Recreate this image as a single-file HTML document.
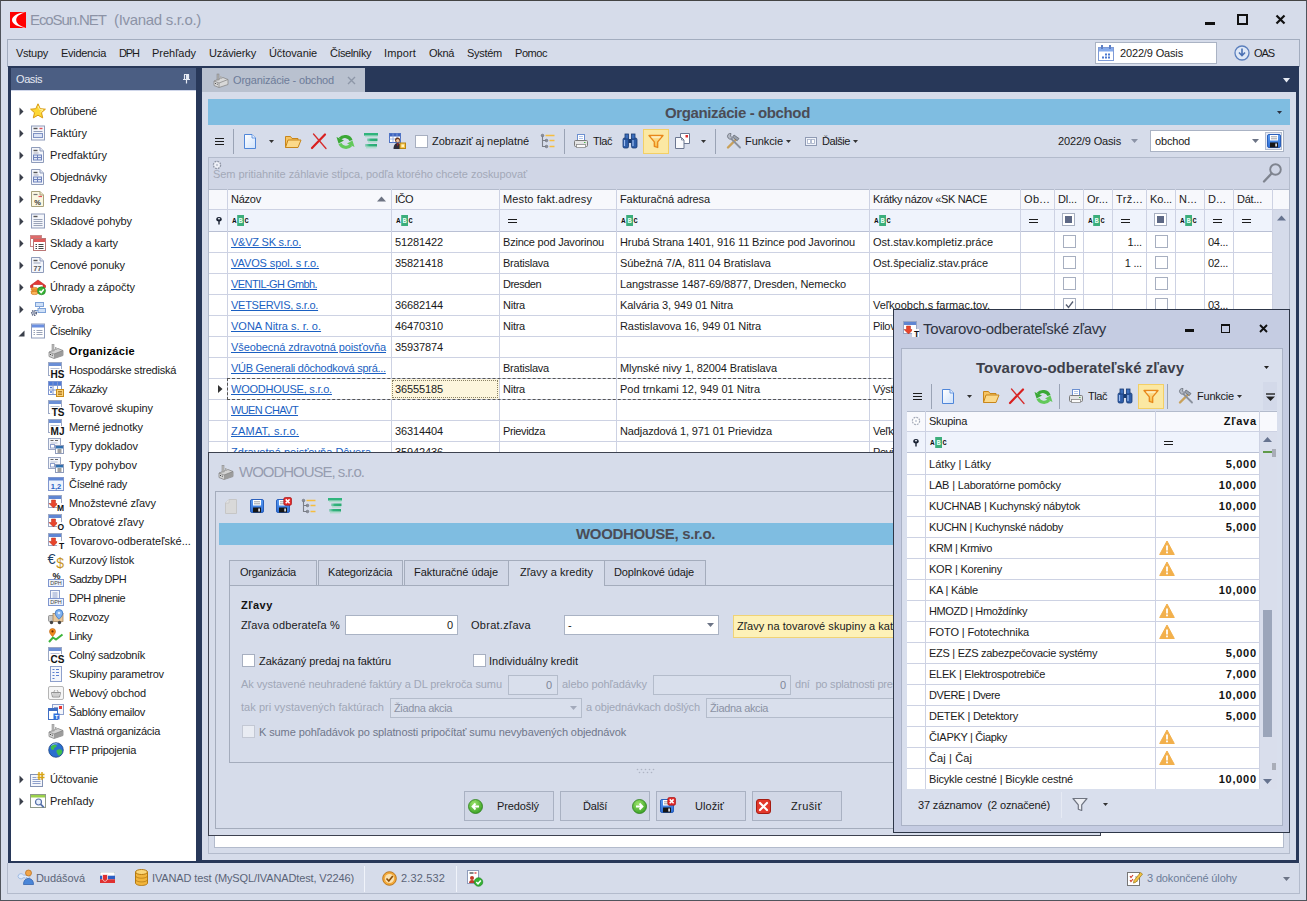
<!DOCTYPE html>
<html lang="sk"><head><meta charset="utf-8"><title>EcoSun.NET (Ivanad s.r.o.)</title>
<style>
html,body{margin:0;padding:0}
body{width:1307px;height:901px;overflow:hidden;position:relative;background:#d6dcea;font-family:"Liberation Sans", sans-serif;font-size:11px}
div,span,svg{position:absolute;box-sizing:border-box}
span{white-space:pre;line-height:14px;height:14px}
</style></head>
<body>
<div style="left:0px;top:0px;width:1307px;height:901px;background:#d6dcea;border:1px solid #50545c;border-top-color:#444;"></div>
<svg style="left:10px;top:12px;" width="16" height="16" viewBox="0 0 16 16"><rect width="16" height="16" fill="#f00"/><path d="M16 0.3C8 0.8 2 4 2 8s6 7.2 14 7.7C10 14.3 6.2 11.5 6.2 8S10 1.7 16 0.3z" fill="#fff"/></svg>
<span style="top:11px;font-size:15px;color:#8c93a6;letter-spacing:-1.1px;left:30px;line-height:18px;height:18px;">EcoSun.NET</span>
<span style="top:11px;font-size:15px;color:#8c93a6;letter-spacing:-0.31px;left:114px;line-height:18px;height:18px;">(Ivanad s.r.o.)</span>
<div style="left:1205px;top:22px;width:10px;height:3px;background:#111"></div>
<div style="left:1237px;top:14px;width:11px;height:11px;border:2px solid #111;border-top-width:2px;"></div>
<svg style="left:1275px;top:14px;" width="11" height="11" viewBox="0 0 11 11"><path d="M1.5 1.5L9.5 9.5M9.5 1.5L1.5 9.5" stroke="#111" stroke-width="2.2"/></svg>
<div style="left:7px;top:39px;width:1293px;height:28px;border:1px solid #a3adbf;border-bottom:none;background:#d6dcea"></div>
<span style="top:46px;font-size:11px;color:#1a1a1a;letter-spacing:-0.27px;left:16px;">Vstupy</span>
<span style="top:46px;font-size:11px;color:#1a1a1a;letter-spacing:-0.3px;left:61px;">Evidencia</span>
<span style="top:46px;font-size:11px;color:#1a1a1a;letter-spacing:-1.08px;left:119px;">DPH</span>
<span style="top:46px;font-size:11px;color:#1a1a1a;letter-spacing:-0.02px;left:152px;">Prehľady</span>
<span style="top:46px;font-size:11px;color:#1a1a1a;letter-spacing:-0.14px;left:209px;">Uzávierky</span>
<span style="top:46px;font-size:11px;color:#1a1a1a;letter-spacing:-0.1px;left:269px;">Účtovanie</span>
<span style="top:46px;font-size:11px;color:#1a1a1a;letter-spacing:-0.47px;left:330px;">Číselníky</span>
<span style="top:46px;font-size:11px;color:#1a1a1a;letter-spacing:0.14px;left:384px;">Import</span>
<span style="top:46px;font-size:11px;color:#1a1a1a;letter-spacing:-0.32px;left:429px;">Okná</span>
<span style="top:46px;font-size:11px;color:#1a1a1a;letter-spacing:-0.28px;left:467px;">Systém</span>
<span style="top:46px;font-size:11px;color:#1a1a1a;letter-spacing:-0.45px;left:515px;">Pomoc</span>
<div style="left:1095px;top:42px;width:122px;height:22px;background:#fff;border:1px solid #aab3c4"></div>
<svg style="left:1097px;top:44px;" width="18" height="18" viewBox="0 0 18 18"><rect x="1.500" y="3.500" width="15" height="13" fill="#fff" stroke="#7e9ad6"/><rect x="2" y="4" width="14" height="3.500" fill="#86abec"/><rect x="4" y="1" width="2" height="4" fill="#5e7fc4"/><rect x="12" y="1" width="2" height="4" fill="#5e7fc4"/><g fill="#4a78d0"><rect x="8" y="9.500" width="2" height="2"/><rect x="11" y="9.500" width="2" height="2"/><rect x="5" y="12.500" width="2" height="2"/><rect x="8" y="12.500" width="2" height="2"/><rect x="11" y="12.500" width="2" height="2"/></g></svg>
<span style="top:46px;font-size:11px;color:#1a1a1a;letter-spacing:-0.15px;left:1120px;">2022/9 Oasis</span>
<svg style="left:1234px;top:45px;" width="16" height="16" viewBox="0 0 16 16"><circle cx="8" cy="8" r="7" fill="#dfe8f6" stroke="#5b7fbd" stroke-width="1.3"/><path d="M8 3.5v6M5 7.5l3 3.2 3-3.200" stroke="#4a70b3" stroke-width="1.6" fill="none"/></svg>
<span style="top:46px;font-size:11px;color:#1a1a1a;letter-spacing:-1.08px;left:1254px;">OAS</span>
<div style="left:8px;top:66px;width:1291px;height:797px;background:#283859"></div>
<div style="left:11px;top:68px;width:185px;height:23px;background:#4b5e83"></div>
<span style="top:72px;font-size:11px;color:#e4e9f3;letter-spacing:-0.42px;left:16px;">Oasis</span>
<svg style="left:182px;top:74px;" width="9" height="10" viewBox="0 0 9 10"><path d="M2 0.500h5M2.500 0.500v5M6.500 0.500v5M1 5.500h7M4.500 5.500v4" stroke="#e4e9f3" stroke-width="1.200" fill="none"/><rect x="4" y="1" width="2" height="4" fill="#e4e9f3"/></svg>
<div style="left:11px;top:90px;width:185px;height:1px;background:#cfd6ea"></div>
<div style="left:11px;top:91px;width:185px;height:770px;background:#fff"></div>
<div style="left:202px;top:68px;width:163px;height:24px;background:#b9c1cf"></div>
<svg style="left:213px;top:72px;" width="16" height="16" viewBox="0 0 16 16"><path d="M1 9l9-3.500 5 2v5l-9 3-5-2z" fill="#d8d8d8" stroke="#8a8a8a" stroke-width=".8"/><path d="M1 9l5 2 9-3.500" fill="none" stroke="#8a8a8a" stroke-width=".8"/><path d="M6 11v4.500" stroke="#8a8a8a" stroke-width=".8"/><rect x="4" y="2" width="2" height="6" fill="#b0b0b0" stroke="#808080" stroke-width=".5"/><rect x="7" y="4" width="1.500" height="3" fill="#b0b0b0"/><rect x="2" y="11" width="1" height="1" fill="#555"/><rect x="3.800" y="11.700" width="1" height="1" fill="#555"/></svg>
<span style="top:73px;font-size:11px;color:#6d7c99;letter-spacing:-0.18px;left:233px;">Organizácie - obchod</span>
<svg style="left:347px;top:76px;" width="9" height="9" viewBox="0 0 9 9"><path d="M1 1L8 8M8 1L1 8" stroke="#8e97a8" stroke-width="1.4"/></svg>
<svg style="left:1283px;top:78px;" width="7" height="5" viewBox="0 0 7 5"><path d="M0 0h7L3.500 4.500z" fill="#e8ecf4"/></svg>
<div style="left:202px;top:92px;width:1094px;height:768px;background:#d6dcea"></div>
<svg style="left:19px;top:107px;" width="5" height="9" viewBox="0 0 5 9"><path d="M.5 .5l4 4-4 4z" fill="#3a3f4a"/></svg>
<svg style="left:30px;top:103px;overflow:visible;" width="16" height="16" viewBox="0 0 16 16"><path d="M8 .8l2.200 4.900 5.200.5-3.900 3.500 1.200 5.200L8 12.200l-4.700 2.700 1.200-5.200L.6 6.200l5.200-.5z" fill="#fdd835" stroke="#d99a12" stroke-width="1" stroke-linejoin="round"/><path d="M8 3l1.500 3.500 3.500.3-2.700 2.300" fill="none" stroke="#fff3a8" stroke-width="1"/></svg>
<span style="top:104px;font-size:11px;color:#1a1a1a;letter-spacing:-0.18px;left:50px;">Obľúbené</span>
<svg style="left:19px;top:129px;" width="5" height="9" viewBox="0 0 5 9"><path d="M.5 .5l4 4-4 4z" fill="#3a3f4a"/></svg>
<svg style="left:30px;top:125px;overflow:visible;" width="16" height="16" viewBox="0 0 16 16"><rect x="1.500" y="1" width="13" height="14" fill="#f4f6fb" stroke="#8f9cbb"/><path d="M3.500 3.500h4" stroke="#555" stroke-width="1.400"/><path d="M9.500 3.500h3" stroke="#e2515a" stroke-width="1.400"/><path d="M3.500 6.500h9" stroke="#8f9cbb"/><rect x="3.500" y="8.500" width="9" height="4" fill="#dbe3f5" stroke="#7f92c4"/></svg>
<span style="top:126px;font-size:11px;color:#1a1a1a;letter-spacing:0.04px;left:50px;">Faktúry</span>
<svg style="left:19px;top:151px;" width="5" height="9" viewBox="0 0 5 9"><path d="M.5 .5l4 4-4 4z" fill="#3a3f4a"/></svg>
<svg style="left:30px;top:147px;overflow:visible;" width="16" height="16" viewBox="0 0 16 16"><path d="M1.500 .5h8.500l3.500 3.500v11.500h-12z" fill="#f4f6fb" stroke="#8f9cbb"/><path d="M10 .5v3.500h3.500" fill="#dfe4f1" stroke="#8f9cbb"/><path d="M3.500 3.500h4" stroke="#555" stroke-width="1.400"/><path d="M3.500 6h5" stroke="#aab" /><rect x="3.500" y="8" width="8" height="5" fill="#e3e9f7" stroke="#6f83bd"/><path d="M3.500 10.500h8M7.500 8v5" stroke="#6f83bd"/></svg>
<span style="top:148px;font-size:11px;color:#1a1a1a;letter-spacing:0.07px;left:50px;">Predfaktúry</span>
<svg style="left:19px;top:173px;" width="5" height="9" viewBox="0 0 5 9"><path d="M.5 .5l4 4-4 4z" fill="#3a3f4a"/></svg>
<svg style="left:30px;top:169px;overflow:visible;" width="16" height="16" viewBox="0 0 16 16"><path d="M1.500 .5h8.500l3.500 3.500v11.500h-12z" fill="#f4f6fb" stroke="#8f9cbb"/><path d="M10 .5v3.500h3.500" fill="#dfe4f1" stroke="#8f9cbb"/><path d="M3.500 3.500h4" stroke="#555" stroke-width="1.400"/><path d="M3.500 6h5" stroke="#aab" /><rect x="3.500" y="8" width="8" height="5" fill="#e3e9f7" stroke="#6f83bd"/><path d="M3.500 10.500h8M7.500 8v5" stroke="#6f83bd"/></svg>
<span style="top:170px;font-size:11px;color:#1a1a1a;letter-spacing:-0.11px;left:50px;">Objednávky</span>
<svg style="left:19px;top:195px;" width="5" height="9" viewBox="0 0 5 9"><path d="M.5 .5l4 4-4 4z" fill="#3a3f4a"/></svg>
<svg style="left:30px;top:191px;overflow:visible;" width="16" height="16" viewBox="0 0 16 16"><path d="M1.500 .5h8.500l3.500 3.500v11.500h-12z" fill="#fbf7e2" stroke="#a9a27c"/><path d="M10 .5v3.500h3.500" fill="#ece6c6" stroke="#a9a27c"/><path d="M3.500 3.500h4" stroke="#777" stroke-width="1.200"/><path d="M8.500 5.500h3.500" stroke="#e2515a" stroke-width="1.200"/><text x="7.500" y="13.500" font-family="Liberation Sans, sans-serif" font-size="7.500" font-weight="bold" text-anchor="middle" fill="#333">%</text></svg>
<span style="top:192px;font-size:11px;color:#1a1a1a;letter-spacing:-0.11px;left:50px;">Preddavky</span>
<svg style="left:19px;top:217px;" width="5" height="9" viewBox="0 0 5 9"><path d="M.5 .5l4 4-4 4z" fill="#3a3f4a"/></svg>
<svg style="left:30px;top:213px;overflow:visible;" width="16" height="16" viewBox="0 0 16 16"><rect x="1.500" y="1" width="13" height="14" fill="#f4f6fb" stroke="#8f9cbb"/><path d="M3.500 3.500h4" stroke="#555" stroke-width="1.400"/><path d="M3.500 6.500h9M3.500 8.500h9M3.500 10.500h9M3.500 12.500h9" stroke="#9aa3b8"/></svg>
<span style="top:214px;font-size:11px;color:#1a1a1a;letter-spacing:-0.12px;left:50px;">Skladové pohyby</span>
<svg style="left:19px;top:239px;" width="5" height="9" viewBox="0 0 5 9"><path d="M.5 .5l4 4-4 4z" fill="#3a3f4a"/></svg>
<svg style="left:30px;top:235px;overflow:visible;" width="16" height="16" viewBox="0 0 16 16"><rect x=".5" y=".5" width="11" height="11" fill="#fff" stroke="#c98a8a"/><rect x="1" y="1" width="10" height="3" fill="#e06a6a"/><rect x="3.500" y="3.500" width="12" height="12" fill="#fff" stroke="#b77"/><rect x="4" y="4" width="11" height="3" fill="#df5b5b"/><path d="M5.500 9.500h1.500M8.500 9.500h5M5.500 11.500h1.500M8.500 11.500h5M5.500 13.500h1.500M8.500 13.500h5" stroke="#444" stroke-width="1.200"/></svg>
<span style="top:236px;font-size:11px;color:#1a1a1a;letter-spacing:-0.08px;left:50px;">Sklady a karty</span>
<svg style="left:19px;top:261px;" width="5" height="9" viewBox="0 0 5 9"><path d="M.5 .5l4 4-4 4z" fill="#3a3f4a"/></svg>
<svg style="left:30px;top:257px;overflow:visible;" width="16" height="16" viewBox="0 0 16 16"><path d="M1.500 .5h8.500l3.500 3.500v11.500h-12z" fill="#f4f6fb" stroke="#8f9cbb"/><path d="M10 .5v3.500h3.500" fill="#dfe4f1" stroke="#8f9cbb"/><path d="M3.500 3.500h4" stroke="#555" stroke-width="1.400"/><path d="M3.500 6h7" stroke="#9aa3b8"/><text x="7.500" y="13.500" font-family="Liberation Sans, sans-serif" font-size="7" font-weight="bold" text-anchor="middle" fill="#555">77</text></svg>
<span style="top:258px;font-size:11px;color:#1a1a1a;letter-spacing:-0.11px;left:50px;">Cenové ponuky</span>
<svg style="left:19px;top:283px;" width="5" height="9" viewBox="0 0 5 9"><path d="M.5 .5l4 4-4 4z" fill="#3a3f4a"/></svg>
<svg style="left:30px;top:279px;overflow:visible;" width="16" height="16" viewBox="0 0 16 16"><path d="M.5 6.500l7.500-5.500 7.500 5.500v2h-2.500v-3h-10v3h-2.500z" fill="#e53935" stroke="#b71c1c" stroke-width=".6"/><ellipse cx="4.500" cy="10" rx="3.500" ry="1.600" fill="#f9a13a" stroke="#c76a12" stroke-width=".6"/><ellipse cx="4.500" cy="12.500" rx="3.500" ry="1.600" fill="#f9a13a" stroke="#c76a12" stroke-width=".6"/><ellipse cx="4.500" cy="14" rx="3.500" ry="1.600" fill="#fbb75c" stroke="#c76a12" stroke-width=".6"/><circle cx="11.500" cy="11.800" r="4" fill="#34b233" stroke="#1d7f1c" stroke-width=".6"/><path d="M9.500 11.800l1.600 1.700 2.700-3.200" stroke="#fff" stroke-width="1.500" fill="none"/></svg>
<span style="top:280px;font-size:11px;color:#1a1a1a;letter-spacing:-0.04px;left:50px;">Úhrady a zápočty</span>
<svg style="left:19px;top:305px;" width="5" height="9" viewBox="0 0 5 9"><path d="M.5 .5l4 4-4 4z" fill="#3a3f4a"/></svg>
<svg style="left:30px;top:301px;overflow:visible;" width="16" height="16" viewBox="0 0 16 16"><rect x="5.500" y="1.500" width="8" height="4" fill="#cfe0f7" stroke="#7ea2d8"/><rect x="8" y="7.500" width="7.500" height="4" fill="#cfe0f7" stroke="#7ea2d8"/><path d="M9.500 5.500v2M5 9.500h3" stroke="#7ea2d8"/><circle cx="4" cy="12" r="2.300" fill="none" stroke="#55607e" stroke-width="1.500" stroke-dasharray="1.200 .8"/><circle cx="4" cy="12" r="1.200" fill="#dfe5f3" stroke="#55607e" stroke-width=".7"/></svg>
<span style="top:302px;font-size:11px;color:#1a1a1a;letter-spacing:-0.14px;left:50px;">Výroba</span>
<svg style="left:18px;top:330px;" width="7" height="7" viewBox="0 0 7 7"><path d="M6.500 .5v6h-6z" fill="#3a3f4a"/></svg>
<svg style="left:30px;top:323px;overflow:visible;" width="16" height="16" viewBox="0 0 16 16"><rect x="1.500" y="1" width="13" height="14" fill="#fff" stroke="#8f9cbb"/><rect x="2" y="1.500" width="12" height="3" fill="#6b8fe0"/><path d="M3.500 7.500h1.500M6.500 7.500h6M3.500 9.500h1.500M6.500 9.500h6M3.500 11.500h1.500M6.500 11.500h6" stroke="#9aa3b8" stroke-width="1.100"/></svg>
<span style="top:324px;font-size:11px;color:#1a1a1a;letter-spacing:-0.47px;left:50px;">Číselníky</span>
<svg style="left:48px;top:343px;overflow:visible;" width="16" height="16" viewBox="0 0 16 16"><path d="M1 9l9-3.500 5 2v5l-9 3-5-2z" fill="#d4d4d4" stroke="#888" stroke-width=".8"/><path d="M6 11l9-3.500v5l-9 3z" fill="#9c9c9c"/><path d="M1 9l5 2 9-3.500" fill="none" stroke="#777" stroke-width=".6"/><rect x="4" y="1.500" width="2" height="6.500" fill="#bdbdbd" stroke="#808080" stroke-width=".5"/><rect x="7" y="4" width="1.500" height="3" fill="#aaa"/><rect x="2" y="11" width="1" height="1" fill="#444"/><rect x="3.800" y="11.700" width="1" height="1" fill="#444"/></svg>
<span style="top:344px;font-size:11px;color:#000;letter-spacing:0.33px;font-weight:bold;left:69px;">Organizácie</span>
<svg style="left:48px;top:362px;overflow:visible;" width="16" height="16" viewBox="0 0 16 16"><rect x=".5" y=".5" width="13" height="13" fill="#fff" stroke="#9aa7c4"/><rect x="1" y="1" width="12" height="3" fill="#6b8fd6"/><path d="M2.500 6.500h9M2.500 8.500h9M2.500 10.500h9" stroke="#b9c2d6" stroke-width="1"/><rect x="2" y="7" width="14" height="9" fill="#fff" opacity=".9"/><text x="16.5" y="16" font-family="Liberation Sans, sans-serif" font-weight="bold" font-size="10" text-anchor="end" fill="#111">HS</text></svg>
<span style="top:363px;font-size:11px;color:#1a1a1a;letter-spacing:-0.23px;left:69px;">Hospodárske strediská</span>
<svg style="left:48px;top:381px;overflow:visible;" width="16" height="16" viewBox="0 0 16 16"><rect x=".5" y=".5" width="13" height="13" fill="#fff" stroke="#7f96cf"/><rect x="1" y="1" width="12" height="3" fill="#4f7bd6"/><path d="M5 .5v13M9.500 .5v13M.5 4.500h13M.5 9h13" stroke="#7f96cf"/><path d="M2 6.500h2M2 11h2" stroke="#4f7bd6" stroke-width="1.400"/><rect x="8.500" y="8.500" width="7" height="7" fill="#fbd37a" stroke="#c98d1b"/><path d="M10 10.500h4M10 12h4M10 13.500h4" stroke="#a86c10" stroke-width=".8"/></svg>
<span style="top:382px;font-size:11px;color:#1a1a1a;letter-spacing:-0.42px;left:69px;">Zákazky</span>
<svg style="left:48px;top:400px;overflow:visible;" width="16" height="16" viewBox="0 0 16 16"><rect x=".5" y=".5" width="13" height="13" fill="#fff" stroke="#9aa7c4"/><rect x="1" y="1" width="12" height="3" fill="#6b8fd6"/><path d="M2.500 6.500h9M2.500 8.500h9M2.500 10.500h9" stroke="#b9c2d6" stroke-width="1"/><rect x="2" y="7" width="14" height="9" fill="#fff" opacity=".9"/><text x="16.5" y="16" font-family="Liberation Sans, sans-serif" font-weight="bold" font-size="10" text-anchor="end" fill="#111">TS</text></svg>
<span style="top:401px;font-size:11px;color:#1a1a1a;letter-spacing:-0.06px;left:69px;">Tovarové skupiny</span>
<svg style="left:48px;top:419px;overflow:visible;" width="16" height="16" viewBox="0 0 16 16"><rect x=".5" y=".5" width="13" height="13" fill="#fff" stroke="#9aa7c4"/><rect x="1" y="1" width="12" height="3" fill="#6b8fd6"/><path d="M2.500 6.500h9M2.500 8.500h9M2.500 10.500h9" stroke="#b9c2d6" stroke-width="1"/><rect x="2" y="7" width="14" height="9" fill="#fff" opacity=".9"/><text x="16.5" y="16" font-family="Liberation Sans, sans-serif" font-weight="bold" font-size="10" text-anchor="end" fill="#111">MJ</text></svg>
<span style="top:420px;font-size:11px;color:#1a1a1a;letter-spacing:-0.09px;left:69px;">Merné jednotky</span>
<svg style="left:48px;top:438px;overflow:visible;" width="16" height="16" viewBox="0 0 16 16"><rect x=".5" y=".5" width="12" height="11" fill="#f4f6fb" stroke="#9aa7c4"/><path d="M2.500 2.500h3M7 2.500h3" stroke="#666" stroke-width="1.200"/><path d="M2.500 5h7" stroke="#b9c2d6"/><rect x="2.500" y="6.500" width="4" height="3.500" fill="#fff" stroke="#8ea0cc"/><rect x="7.500" y="7.500" width="8" height="8" fill="#fff" stroke="#8f9cbb"/><rect x="8" y="8" width="7" height="2.500" fill="#2f6fae"/><path d="M9.500 12h4M9.500 14h4" stroke="#444" stroke-width="1.100"/></svg>
<span style="top:439px;font-size:11px;color:#1a1a1a;letter-spacing:-0.1px;left:69px;">Typy dokladov</span>
<svg style="left:48px;top:457px;overflow:visible;" width="16" height="16" viewBox="0 0 16 16"><rect x=".5" y=".5" width="12" height="11" fill="#f4f6fb" stroke="#9aa7c4"/><path d="M2.500 2.500h3M7 2.500h3" stroke="#666" stroke-width="1.200"/><path d="M2.500 5h7" stroke="#b9c2d6"/><rect x="2.500" y="6.500" width="4" height="3.500" fill="#fff" stroke="#8ea0cc"/><rect x="7.500" y="7.500" width="8" height="8" fill="#fff" stroke="#8f9cbb"/><rect x="8" y="8" width="7" height="2.500" fill="#2f6fae"/><path d="M9.500 12h4M9.500 14h4" stroke="#444" stroke-width="1.100"/></svg>
<span style="top:458px;font-size:11px;color:#1a1a1a;letter-spacing:0.01px;left:69px;">Typy pohybov</span>
<svg style="left:48px;top:476px;overflow:visible;" width="16" height="16" viewBox="0 0 16 16"><rect x=".5" y="1.500" width="15" height="13" fill="#eef3fc" stroke="#7f96cf"/><rect x="1" y="2" width="14" height="2.500" fill="#5f86d3"/><text x="8" y="12.500" font-family="Liberation Sans, sans-serif" font-size="7.500" font-weight="bold" text-anchor="middle" fill="#2762c4">1,2</text></svg>
<span style="top:477px;font-size:11px;color:#1a1a1a;letter-spacing:-0.31px;left:69px;">Číselné rady</span>
<svg style="left:48px;top:495px;overflow:visible;" width="16" height="16" viewBox="0 0 16 16"><rect x=".5" y=".5" width="13" height="12" fill="#fff" stroke="#9aa7c4"/><rect x="1" y="1" width="12" height="3" fill="#5f86d3"/><path d="M3.500 5h4v3.500h2.500l-4.500 4.500-4.500-4.500h2.500z" fill="#e8452c" stroke="#b52a18" stroke-width=".5"/><rect x="9" y="8" width="7" height="8" fill="#fff" opacity=".9"/><text x="16.2" y="15.5" font-family="Liberation Sans, sans-serif" font-weight="bold" font-size="8.5" text-anchor="end" fill="#111">M</text></svg>
<span style="top:496px;font-size:11px;color:#1a1a1a;letter-spacing:-0.08px;left:69px;">Množstevné zľavy</span>
<svg style="left:48px;top:514px;overflow:visible;" width="16" height="16" viewBox="0 0 16 16"><rect x=".5" y=".5" width="13" height="12" fill="#fff" stroke="#9aa7c4"/><rect x="1" y="1" width="12" height="3" fill="#5f86d3"/><path d="M3.500 5h4v3.500h2.500l-4.500 4.500-4.500-4.500h2.500z" fill="#e8452c" stroke="#b52a18" stroke-width=".5"/><rect x="9" y="8" width="7" height="8" fill="#fff" opacity=".9"/><text x="16.2" y="15.5" font-family="Liberation Sans, sans-serif" font-weight="bold" font-size="8.5" text-anchor="end" fill="#111">O</text></svg>
<span style="top:515px;font-size:11px;color:#1a1a1a;letter-spacing:0.06px;left:69px;">Obratové zľavy</span>
<svg style="left:48px;top:533px;overflow:visible;" width="16" height="16" viewBox="0 0 16 16"><rect x=".5" y=".5" width="13" height="12" fill="#fff" stroke="#9aa7c4"/><rect x="1" y="1" width="12" height="3" fill="#5f86d3"/><path d="M3.500 5h4v3.500h2.500l-4.500 4.500-4.500-4.500h2.500z" fill="#e8452c" stroke="#b52a18" stroke-width=".5"/><rect x="9" y="8" width="7" height="8" fill="#fff" opacity=".9"/><text x="16.2" y="15.5" font-family="Liberation Sans, sans-serif" font-weight="bold" font-size="8.5" text-anchor="end" fill="#111">T</text></svg>
<span style="top:534px;font-size:11px;color:#1a1a1a;letter-spacing:0.03px;left:69px;">Tovarovo-odberateľské...</span>
<svg style="left:48px;top:552px;overflow:visible;" width="16" height="16" viewBox="0 0 16 16"><text x="-.5" y="11.500" font-family="Liberation Sans, sans-serif" font-size="14.500" fill="#1c3f66">€</text><text x="8.300" y="15.500" font-family="Liberation Sans, sans-serif" font-size="14" fill="#c8961e">$</text></svg>
<span style="top:553px;font-size:11px;color:#1a1a1a;letter-spacing:-0.25px;left:69px;">Kurzový lístok</span>
<svg style="left:48px;top:571px;overflow:visible;" width="16" height="16" viewBox="0 0 16 16"><text x="8.500" y="7.500" font-family="Liberation Sans, sans-serif" font-size="9" font-weight="bold" text-anchor="middle" fill="#222">%</text><rect x=".5" y="8.500" width="15" height="7" fill="#eef3fc" stroke="#7f96cf"/><text x="8" y="14.300" font-family="Liberation Sans, sans-serif" font-size="5.500" text-anchor="middle" fill="#444">DPH</text></svg>
<span style="top:572px;font-size:11px;color:#1a1a1a;letter-spacing:-0.6px;left:69px;">Sadzby DPH</span>
<svg style="left:48px;top:590px;overflow:visible;" width="16" height="16" viewBox="0 0 16 16"><rect x="2.500" y=".5" width="9" height="9" fill="#f4f6fb" stroke="#8ea0cc"/><path d="M4.500 3h5M4.500 5h5M4.500 7h5" stroke="#8ea0cc"/><rect x=".5" y="8.500" width="15" height="7" fill="#eef3fc" stroke="#7f96cf"/><text x="8" y="14.300" font-family="Liberation Sans, sans-serif" font-size="5.500" text-anchor="middle" fill="#444">DPH</text></svg>
<span style="top:591px;font-size:11px;color:#1a1a1a;letter-spacing:-0.52px;left:69px;">DPH plnenie</span>
<svg style="left:48px;top:609px;overflow:visible;" width="16" height="16" viewBox="0 0 16 16"><rect x=".5" y="6.500" width="5" height="6" rx="1" fill="#c9c9c9" stroke="#777" stroke-width=".7"/><rect x="5" y="4.500" width="10" height="8" fill="#e8c79a" stroke="#9a7a50" stroke-width=".7"/><circle cx="3.500" cy="13.500" r="1.700" fill="#444"/><circle cx="11.500" cy="13.500" r="1.700" fill="#444"/><path d="M11 .5a3.800 3.800 0 0 1 3.800 3.800c0 2.500-3.800 6-3.800 6s-3.800-3.500-3.800-6A3.800 3.800 0 0 1 11 .5z" fill="#7fb2f0" stroke="#2f6fc4" stroke-width=".8"/><circle cx="11" cy="4" r="1.300" fill="#dcebff"/></svg>
<span style="top:610px;font-size:11px;color:#1a1a1a;letter-spacing:-0.31px;left:69px;">Rozvozy</span>
<svg style="left:48px;top:628px;overflow:visible;" width="16" height="16" viewBox="0 0 16 16"><path d="M1 14l4-4.500 3 2 6.500-5" stroke="#3db53a" stroke-width="2" fill="none"/><path d="M4.500 .5a3 3 0 0 1 3 3c0 2-3 5-3 5s-3-3-3-5a3 3 0 0 1 3-3z" fill="#f28a1e" stroke="#b85f0c" stroke-width=".6"/><circle cx="4.500" cy="3.400" r="1.100" fill="#6b2c00"/></svg>
<span style="top:629px;font-size:11px;color:#1a1a1a;letter-spacing:-0.54px;left:69px;">Linky</span>
<svg style="left:48px;top:647px;overflow:visible;" width="16" height="16" viewBox="0 0 16 16"><rect x=".5" y=".5" width="13" height="13" fill="#fff" stroke="#9aa7c4"/><rect x="1" y="1" width="12" height="3" fill="#6b8fd6"/><path d="M2.500 6.500h9M2.500 8.500h9M2.500 10.500h9" stroke="#b9c2d6" stroke-width="1"/><rect x="2" y="7" width="14" height="9" fill="#fff" opacity=".9"/><text x="16.5" y="16" font-family="Liberation Sans, sans-serif" font-weight="bold" font-size="10" text-anchor="end" fill="#111">CS</text></svg>
<span style="top:648px;font-size:11px;color:#1a1a1a;letter-spacing:-0.36px;left:69px;">Colný sadzobník</span>
<svg style="left:48px;top:666px;overflow:visible;" width="16" height="16" viewBox="0 0 16 16"><rect x="2.500" y=".5" width="11" height="15" fill="#f4f6fb" stroke="#8ea0cc"/><path d="M4.500 3.500h2M8 3.500h3M4.500 6.500h2M8 6.500h3M4.500 9.500h2M8 9.500h3M4.500 12.500h2" stroke="#5c7fd0" stroke-width="1.100"/></svg>
<span style="top:667px;font-size:11px;color:#1a1a1a;letter-spacing:-0.16px;left:69px;">Skupiny parametrov</span>
<svg style="left:48px;top:685px;overflow:visible;" width="16" height="16" viewBox="0 0 16 16"><rect x=".5" y="1.500" width="15" height="13" rx="1.500" fill="#f6f6f6" stroke="#b5b5b5"/><path d="M3.500 7.500h9l-1 4.500h-7z" fill="none" stroke="#888" stroke-width=".9"/><path d="M5.500 7.500l1.500-2.500M10.500 7.500l-1.500-2.500M6 8v3.500M8 8v3.500M10 8v3.500" stroke="#888" stroke-width=".7"/></svg>
<span style="top:686px;font-size:11px;color:#1a1a1a;letter-spacing:-0.13px;left:69px;">Webový obchod</span>
<svg style="left:48px;top:704px;overflow:visible;" width="16" height="16" viewBox="0 0 16 16"><rect x="4.500" y=".5" width="11" height="10" fill="#f4f6fb" stroke="#8ea0cc"/><rect x="11" y="2" width="3" height="3" fill="#e53935"/><path d="M6 3.500h4M6 5.500h4" stroke="#8ea0cc"/><rect x=".5" y="4.500" width="9" height="11" fill="#fff" stroke="#3f6ec4"/><rect x="1" y="5" width="8" height="2" fill="#3f6ec4"/><rect x="5.500" y="9.500" width="6" height="6" fill="#2f6fdc"/><text x="8.500" y="14.800" font-family="Liberation Sans, sans-serif" font-size="6" font-weight="bold" text-anchor="middle" fill="#fff">T</text></svg>
<span style="top:705px;font-size:11px;color:#1a1a1a;letter-spacing:-0.31px;left:69px;">Šablóny emailov</span>
<svg style="left:48px;top:723px;overflow:visible;" width="16" height="16" viewBox="0 0 16 16"><path d="M1 9l9-3.500 5 2v5l-9 3-5-2z" fill="#d4d4d4" stroke="#888" stroke-width=".8"/><path d="M6 11l9-3.500v5l-9 3z" fill="#9c9c9c"/><path d="M1 9l5 2 9-3.500" fill="none" stroke="#777" stroke-width=".6"/><rect x="4" y="1.500" width="2" height="6.500" fill="#bdbdbd" stroke="#808080" stroke-width=".5"/><rect x="7" y="4" width="1.500" height="3" fill="#aaa"/><rect x="2" y="11" width="1" height="1" fill="#444"/><rect x="3.800" y="11.700" width="1" height="1" fill="#444"/></svg>
<span style="top:724px;font-size:11px;color:#1a1a1a;letter-spacing:-0.26px;left:69px;">Vlastná organizácia</span>
<svg style="left:48px;top:742px;overflow:visible;" width="16" height="16" viewBox="0 0 16 16"><circle cx="8" cy="8" r="7.300" fill="#2a6fd0" stroke="#123a7a" stroke-width=".7"/><path d="M3 4.500c1.500-1.500 3.500-2 5-1.500s.5 2-1 2.500-.5 2.500-2 2.500-2.800-2-2-3.500zM9 8c1.500-1 4-1 5 .5s-1 4.500-2.500 5-2-1.500-2.500-2.500-1-2.300 0-3z" fill="#3fbf4a"/><path d="M3.500 3.500c1.500-1.500 4-2.200 6-1.500" stroke="#bfe0ff" stroke-width=".9" fill="none" opacity=".8"/></svg>
<span style="top:743px;font-size:11px;color:#1a1a1a;letter-spacing:-0.31px;left:69px;">FTP pripojenia</span>
<svg style="left:19px;top:775px;" width="5" height="9" viewBox="0 0 5 9"><path d="M.5 .5l4 4-4 4z" fill="#3a3f4a"/></svg>
<svg style="left:30px;top:771px;overflow:visible;" width="16" height="16" viewBox="0 0 16 16"><rect x=".5" y="3.500" width="12" height="12" fill="#f4f6fb" stroke="#8392b4"/><path d="M2.500 6.500h4M2.500 8.500h8M2.500 10.500h8M2.500 12.500h8" stroke="#8ea0cc"/><path d="M9 1v8M12 1v8M7.500 3.500h7M7.500 6.500h7" stroke="#d9a514" stroke-width="1.400"/></svg>
<span style="top:772px;font-size:11px;color:#1a1a1a;letter-spacing:-0.1px;left:50px;">Účtovanie</span>
<svg style="left:19px;top:797px;" width="5" height="9" viewBox="0 0 5 9"><path d="M.5 .5l4 4-4 4z" fill="#3a3f4a"/></svg>
<svg style="left:30px;top:793px;overflow:visible;" width="16" height="16" viewBox="0 0 16 16"><rect x=".5" y="1.500" width="15" height="13" fill="#fff" stroke="#8f9a8a"/><rect x="1" y="2" width="14" height="2.500" fill="#9ad14b"/><circle cx="8.500" cy="9" r="3" fill="#e8f1ff" stroke="#5570a8" stroke-width="1.200"/><path d="M10.800 11.300l3 3" stroke="#5570a8" stroke-width="1.800"/></svg>
<span style="top:794px;font-size:11px;color:#1a1a1a;letter-spacing:-0.02px;left:50px;">Prehľady</span>
<div style="left:208px;top:99px;width:1082px;height:26px;background:#7fbde1"></div>
<span style="top:103px;font-size:15px;color:#4b4c56;letter-spacing:-0.38px;font-weight:bold;left:665px;line-height:20px;height:20px;">Organizácie - obchod</span>
<svg style="left:1277px;top:111px;" width="5" height="3" viewBox="0 0 5 3"><path d="M0 0h5L2.5 3z" fill="#2b3140"/></svg>
<svg style="left:215px;top:138px;overflow:visible;" width="9" height="7" viewBox="0 0 9 7"><path d="M0 .5h9M0 3.500h9M0 6.500h9" stroke="#1c1c1c" stroke-width="1"/></svg>
<div style="left:233px;top:129px;width:1px;height:25px;background:#9aa3b5"></div>
<svg style="left:244px;top:134px;overflow:visible;" width="12" height="15" viewBox="0 0 12 15"><defs><linearGradient id="gn" x1="0" y1="0" x2="1" y2="1"><stop offset="0" stop-color="#fff"/><stop offset="1" stop-color="#cfe2fb"/></linearGradient></defs><path d="M.5 .5h7.500l3.500 3.500v10.500h-11z" fill="url(#gn)" stroke="#4f86d9"/><path d="M8 .5v3.500h3.500" fill="#e6f0ff" stroke="#4f86d9" stroke-width=".8"/></svg>
<svg style="left:269px;top:140px;" width="5" height="3" viewBox="0 0 5 3"><path d="M0 0h5L2.5 3z" fill="#333"/></svg>
<svg style="left:285px;top:135px;overflow:visible;" width="16" height="13" viewBox="0 0 16 13"><path d="M.5 12.500v-11h5l1.500 2h6v2" fill="#f6c463" stroke="#c8861a"/><path d="M.5 12.500l2.500-7.500h13l-3 7.500z" fill="#fbd98a" stroke="#c8861a" stroke-linejoin="round"/></svg>
<svg style="left:311px;top:133px;overflow:visible;" width="16" height="16" viewBox="0 0 16 16"><path d="M1 15L14 1.500" stroke="#d91f1f" stroke-width="2.200" stroke-linecap="round"/><path d="M2.500 1L15 15.500" stroke="#d62b2b" stroke-width="1.300" stroke-linecap="round"/></svg>
<svg style="left:337px;top:134px;overflow:visible;" width="17" height="15" viewBox="0 0 17 15"><path d="M14 6.500A6.200 5.500 0 0 0 3 4.800" fill="none" stroke="#3aa836" stroke-width="3.200"/><path d="M-.5 3l2 6.500 5.500-3z" fill="#3aa836"/><path d="M3 9.500A6.200 5.500 0 0 0 14 11" fill="none" stroke="#62c95a" stroke-width="3.200"/><path d="M17.500 13l-2-6.500-5.500 3z" fill="#62c95a"/></svg>
<svg style="left:364px;top:133px;overflow:visible;" width="14" height="16" viewBox="0 0 14 16"><defs><linearGradient id="gl" x1="0" y1="0" x2="1" y2="0"><stop offset="0" stop-color="#2fb47c" stop-opacity=".35"/><stop offset=".35" stop-color="#2fb47c"/><stop offset="1" stop-color="#2aa872"/></linearGradient></defs><rect x="0" y="0" width="14" height="2.600" fill="#2fb47c"/><rect x="3" y="5.500" width="10.500" height="2.600" fill="url(#gl)"/><rect x="1" y="11" width="12" height="2.600" fill="url(#gl)"/><rect x="1" y="2.600" width="12.500" height="1.600" fill="#9fdcc0" opacity=".7"/><rect x="4" y="8.100" width="9" height="1.600" fill="#9fdcc0" opacity=".7"/><rect x="2" y="13.600" width="10.500" height="1.800" fill="#9fdcc0" opacity=".7"/></svg>
<svg style="left:389px;top:133px;overflow:visible;" width="17" height="16" viewBox="0 0 17 16"><rect x=".5" y=".5" width="11" height="9" fill="#fff" stroke="#4f73c4"/><rect x="1" y="1" width="10" height="2.500" fill="#3f66c0"/><path d="M4 .5v9M8 .5v9M.5 6h11" stroke="#8ea6de" stroke-width=".8"/><circle cx="8.500" cy="7" r="2.500" fill="#6b3a1f"/><circle cx="8.700" cy="7.600" r="1.600" fill="#f2c7a0"/><path d="M4.500 16c0-4 2-6 4-6s4.500 2 4.500 6z" fill="#2d2d3a"/><path d="M8 10.500l.8 3 .8-3z" fill="#c22"/><rect x="11" y="10" width="5.500" height="5.500" fill="#f7c64f" stroke="#b98512"/><rect x="12.500" y="11.500" width="2.500" height="2.500" fill="#fff3c4"/></svg>
<svg style="left:415px;top:135px;" width="13" height="13" viewBox="0 0 13 13"><rect x=".5" y=".5" width="12" height="12" fill="#fff" stroke="#a7afc0"/></svg>
<span style="top:134px;font-size:11px;color:#1a1a1a;letter-spacing:-0.03px;left:432px;">Zobraziť aj neplatné</span>
<svg style="left:541px;top:134px;overflow:visible;" width="14" height="14" viewBox="0 0 14 14"><path d="M1.500 1.500v11h3.500M1.500 6.500h3.500" stroke="#7b7f88" fill="none" stroke-width="1.100"/><circle cx="1.500" cy="1.500" r="1.300" fill="#8a8e97" stroke="#666a73" stroke-width=".6"/><circle cx="5.500" cy="6.500" r="1.300" fill="#8a8e97" stroke="#666a73" stroke-width=".6"/><circle cx="5.500" cy="12.500" r="1.300" fill="#8a8e97" stroke="#666a73" stroke-width=".6"/><path d="M4.500 1.500h9M8.500 6.500h5M8.500 12.500h5" stroke="#f6bd3f" stroke-width="1.700"/></svg>
<div style="left:564px;top:129px;width:1px;height:25px;background:#9aa3b5"></div>
<svg style="left:574px;top:134px;overflow:visible;" width="14" height="14" viewBox="0 0 14 14"><rect x="3.500" y=".5" width="7" height="6" fill="#fff" stroke="#6b8fd0"/><path d="M5 2.500h4M5 4.500h4" stroke="#9db6e4" stroke-width=".8"/><rect x=".5" y="6.500" width="13" height="6" rx="1" fill="#e4e4e4" stroke="#7b7b7b"/><rect x="2.500" y="10.500" width="9" height="3" fill="#fafafa" stroke="#8a8a8a" stroke-width=".8"/><rect x="10" y="8" width="1.500" height="1" fill="#46b446"/></svg>
<span style="top:134px;font-size:11px;color:#1a1a1a;letter-spacing:-0.45px;left:593px;">Tlač</span>
<svg style="left:622px;top:133px;overflow:visible;" width="16" height="16" viewBox="0 0 16 16"><rect x="1" y="5" width="5.500" height="10" rx="1.500" fill="#2e5da8" stroke="#173a73" stroke-width=".8"/><rect x="9.500" y="5" width="5.500" height="10" rx="1.500" fill="#2e5da8" stroke="#173a73" stroke-width=".8"/><rect x="3" y="1" width="3.500" height="5" fill="#3b6dbb" stroke="#173a73" stroke-width=".8"/><rect x="9.500" y="1" width="3.500" height="5" fill="#3b6dbb" stroke="#173a73" stroke-width=".8"/><rect x="6.500" y="6" width="3" height="4" fill="#173a73"/><path d="M2.500 7v6M11 7v6" stroke="#9cbcf0" stroke-width="1.200"/></svg>
<div style="left:643px;top:129px;width:26px;height:25px;background:#fbe8a3;border:1px solid #f3cf66"></div>
<svg style="left:648px;top:134px;overflow:visible;" width="16" height="16" viewBox="0 0 16 16"><defs><linearGradient id="fg" x1="0" y1="0" x2="0" y2="1"><stop offset="0" stop-color="#fde9a8"/><stop offset="1" stop-color="#f7b73a"/></linearGradient></defs><path d="M1 1.500h14l-5.300 6.300v5.700l-3.400-1.200v-4.500z" fill="url(#fg)" stroke="#e8871a" stroke-width="1.300" stroke-linejoin="round"/><path d="M3.500 3h9" stroke="#fff8dc" stroke-width="1"/></svg>
<svg style="left:675px;top:133px;overflow:visible;" width="15" height="16" viewBox="0 0 15 16"><path d="M5.500 .5h9v10h-9z" fill="#fff" stroke="#6b7690"/><rect x="10.500" y="2" width="2.500" height="2.500" fill="#e03030"/><path d="M.5 4.500h6l2.500 2.500v8.500h-8.500z" fill="#f8f9fc" stroke="#6b7690"/><path d="M6.500 4.500v2.500h2.500" fill="none" stroke="#6b7690" stroke-width=".8"/></svg>
<svg style="left:701px;top:140px;" width="5" height="3" viewBox="0 0 5 3"><path d="M0 0h5L2.5 3z" fill="#333"/></svg>
<div style="left:715px;top:129px;width:1px;height:25px;background:#9aa3b5"></div>
<svg style="left:726px;top:133px;overflow:visible;" width="16" height="16" viewBox="0 0 16 16"><path d="M2 14.500l8.500-8.500" stroke="#c9a15a" stroke-width="2.400" stroke-linecap="round"/><path d="M8 2l5 3.500-1.800 2.200-4.700-3.500z" fill="#9aa1ad" stroke="#5b616c" stroke-width=".7"/><path d="M14 14.500l-8.500-8.500" stroke="#8a919d" stroke-width="1.800" stroke-linecap="round"/><path d="M2 1.500a3 3 0 0 0 3.500 4.500l1-1-2-2 .5-2.500a3 3 0 0 0-3 1z" fill="#b4bac6" stroke="#5b616c" stroke-width=".7"/></svg>
<span style="top:134px;font-size:11px;color:#1a1a1a;letter-spacing:-0.08px;left:745px;">Funkcie</span>
<svg style="left:786px;top:140px;" width="5" height="3" viewBox="0 0 5 3"><path d="M0 0h5L2.5 3z" fill="#333"/></svg>
<svg style="left:805px;top:137px;overflow:visible;" width="12" height="9" viewBox="0 0 12 9"><rect x=".5" y=".5" width="11" height="8" fill="#f0f3fa" stroke="#8f9ab3"/><rect x="2.500" y="2.500" width="3" height="4" fill="#fff" stroke="#a4aec6" stroke-width=".8"/><rect x="6.500" y="2.500" width="3" height="4" fill="#fff" stroke="#a4aec6" stroke-width=".8"/></svg>
<span style="top:134px;font-size:11px;color:#1a1a1a;letter-spacing:-0.43px;left:822px;">Ďalšie</span>
<svg style="left:853px;top:140px;" width="5" height="3" viewBox="0 0 5 3"><path d="M0 0h5L2.5 3z" fill="#333"/></svg>
<span style="top:134px;font-size:11px;color:#1a1a1a;letter-spacing:-0.15px;left:1058px;">2022/9 Oasis</span>
<svg style="left:1131px;top:139px;" width="7" height="4" viewBox="0 0 7 4"><path d="M0 0h7L3.5 4z" fill="#8b93a6"/></svg>
<div style="left:1150px;top:130px;width:134px;height:22px;background:#fff;border:1px solid #aab3c4"></div>
<span style="top:134px;font-size:11px;color:#1a1a1a;letter-spacing:-0.18px;left:1155px;">obchod</span>
<svg style="left:1252px;top:139px;" width="7" height="4" viewBox="0 0 7 4"><path d="M0 0h7L3.5 4z" fill="#6c7486"/></svg>
<div style="left:1265px;top:132px;width:17px;height:18px;background:#e6ebf6;border:1px solid #b4bdd0"></div>
<svg style="left:1267px;top:134px;overflow:visible;" width="14" height="14" viewBox="0 0 14 14"><defs><linearGradient id="sv" x1="0" y1="0" x2="0" y2="1"><stop offset="0" stop-color="#5a9cf2"/><stop offset="1" stop-color="#2f6fd6"/></linearGradient></defs><rect x=".5" y=".5" width="13" height="13" rx="1.500" fill="url(#sv)" stroke="#2a5fbb"/><rect x="3" y="1" width="8" height="5.500" fill="#fff"/><path d="M4 2.800h6M4 4.800h6" stroke="#8f949e" stroke-width=".9"/><rect x="3" y="8.500" width="8" height="5" fill="#161616"/><rect x="8.300" y="9.500" width="1.600" height="3" fill="#e8eefb"/></svg>
<div style="left:208px;top:157px;width:1082px;height:33px;background:#d0d6e6;border:1px solid #b3bbcc"></div>
<svg style="left:212px;top:160px;" width="10" height="10" viewBox="0 0 10 10"><circle cx="5" cy="5" r="3.600" fill="#f1f3f9" stroke="#8f96a6" stroke-width="1.300" stroke-dasharray="1.900 .9"/><circle cx="5" cy="5" r="1.200" fill="#c3c8d6"/></svg>
<span style="top:167px;font-size:11px;color:#a3a9b8;letter-spacing:-0.05px;left:213px;">Sem pritiahnite záhlavie stĺpca, podľa ktorého chcete zoskupovať</span>
<svg style="left:1263px;top:163px;overflow:visible;" width="20" height="20" viewBox="0 0 20 20"><circle cx="12.500" cy="6.500" r="5.300" fill="none" stroke="#7f848f" stroke-width="1.900"/><path d="M8.500 10.500l-7.500 8" stroke="#7f848f" stroke-width="2.300" stroke-linecap="round"/></svg>
<div style="left:208px;top:189px;width:1082px;height:264px;background:#fff"></div>
<div style="left:208px;top:189px;width:1064px;height:21px;background:#f7f8fc;border-top:1px solid #b3bbcc;border-bottom:1px solid #cdd2e3"></div>
<div style="left:1272px;top:189px;width:18px;height:264px;background:#d5dbea"></div>
<div style="left:1272px;top:189px;width:18px;height:21px;background:#f7f8fc;border-top:1px solid #b3bbcc;border-bottom:1px solid #cdd2e3;border-left:1px solid #cdd2e3"></div>
<span style="top:192px;font-size:11px;color:#1a1a1a;letter-spacing:-0.24px;left:231px;">Názov</span>
<span style="top:192px;font-size:11px;color:#1a1a1a;letter-spacing:-0.52px;left:395px;">IČO</span>
<span style="top:192px;font-size:11px;color:#1a1a1a;letter-spacing:0.13px;left:503px;">Mesto fakt.adresy</span>
<span style="top:192px;font-size:11px;color:#1a1a1a;letter-spacing:-0.1px;left:620px;">Fakturačná adresa</span>
<span style="top:192px;font-size:11px;color:#1a1a1a;letter-spacing:-0.34px;left:873px;">Krátky názov «SK NACE</span>
<span style="top:192px;font-size:11px;color:#1a1a1a;letter-spacing:0.43px;left:1024px;">Ob...</span>
<span style="top:192px;font-size:11px;color:#1a1a1a;letter-spacing:-0.11px;left:1058px;">Dl...</span>
<span style="top:192px;font-size:11px;color:#1a1a1a;letter-spacing:0.04px;left:1087px;">Or...</span>
<span style="top:192px;font-size:11px;color:#1a1a1a;letter-spacing:0.39px;left:1116px;">Trž...</span>
<span style="top:192px;font-size:11px;color:#1a1a1a;letter-spacing:-0.12px;left:1150px;">Ko...</span>
<span style="top:192px;font-size:11px;color:#1a1a1a;letter-spacing:0.22px;left:1179px;">N...</span>
<span style="top:192px;font-size:11px;color:#1a1a1a;letter-spacing:0.22px;left:1208px;">D...</span>
<span style="top:192px;font-size:11px;color:#1a1a1a;letter-spacing:-0.22px;left:1237px;">Dát...</span>
<svg style="left:377px;top:196px;" width="9" height="6" viewBox="0 0 9 6"><path d="M0 5.500h9L4.500 .5z" fill="#6d7382"/></svg>
<div style="left:208px;top:210px;width:1064px;height:22px;background:#eff3fc;border-bottom:1px solid #b9c0d4"></div>
<svg style="left:216px;top:217px;" width="6" height="8" viewBox="0 0 6 8"><ellipse cx="3" cy="2.200" rx="2.700" ry="2.200" fill="#1a2233"/><path d="M3 3.500v4" stroke="#1a2233" stroke-width="1.400"/><ellipse cx="3" cy="1.800" rx="1.200" ry=".7" fill="#eff3fc"/></svg>
<svg style="left:232px;top:215px;overflow:visible;" width="17" height="11" viewBox="0 0 17 11"><rect x="5.200" y="0" width="6.800" height="11" fill="#3cae7b"/><text x=".3" y="8" font-family="Liberation Mono, monospace" font-size="7" font-weight="bold" fill="#111">A</text><text x="6.500" y="8" font-family="Liberation Mono, monospace" font-size="7" font-weight="bold" fill="#eafff4">B</text><text x="12.600" y="8" font-family="Liberation Mono, monospace" font-size="7" font-weight="bold" fill="#111">C</text></svg>
<svg style="left:396px;top:215px;overflow:visible;" width="17" height="11" viewBox="0 0 17 11"><rect x="5.200" y="0" width="6.800" height="11" fill="#3cae7b"/><text x=".3" y="8" font-family="Liberation Mono, monospace" font-size="7" font-weight="bold" fill="#111">A</text><text x="6.500" y="8" font-family="Liberation Mono, monospace" font-size="7" font-weight="bold" fill="#eafff4">B</text><text x="12.600" y="8" font-family="Liberation Mono, monospace" font-size="7" font-weight="bold" fill="#111">C</text></svg>
<svg style="left:508px;top:219px;" width="9" height="5" viewBox="0 0 9 5"><path d="M0 .5h9M0 3.500h9" stroke="#1c1c1c" stroke-width="1"/></svg>
<svg style="left:621px;top:215px;overflow:visible;" width="17" height="11" viewBox="0 0 17 11"><rect x="5.200" y="0" width="6.800" height="11" fill="#3cae7b"/><text x=".3" y="8" font-family="Liberation Mono, monospace" font-size="7" font-weight="bold" fill="#111">A</text><text x="6.500" y="8" font-family="Liberation Mono, monospace" font-size="7" font-weight="bold" fill="#eafff4">B</text><text x="12.600" y="8" font-family="Liberation Mono, monospace" font-size="7" font-weight="bold" fill="#111">C</text></svg>
<svg style="left:874px;top:215px;overflow:visible;" width="17" height="11" viewBox="0 0 17 11"><rect x="5.200" y="0" width="6.800" height="11" fill="#3cae7b"/><text x=".3" y="8" font-family="Liberation Mono, monospace" font-size="7" font-weight="bold" fill="#111">A</text><text x="6.500" y="8" font-family="Liberation Mono, monospace" font-size="7" font-weight="bold" fill="#eafff4">B</text><text x="12.600" y="8" font-family="Liberation Mono, monospace" font-size="7" font-weight="bold" fill="#111">C</text></svg>
<svg style="left:1029px;top:219px;" width="9" height="5" viewBox="0 0 9 5"><path d="M0 .5h9M0 3.500h9" stroke="#1c1c1c" stroke-width="1"/></svg>
<svg style="left:1062px;top:213px;" width="13" height="13" viewBox="0 0 13 13"><rect x=".5" y=".5" width="12" height="12" fill="#fff" stroke="#a7afc0"/><rect x="3" y="3" width="7" height="7" fill="#5d6885"/></svg>
<svg style="left:1088px;top:215px;overflow:visible;" width="17" height="11" viewBox="0 0 17 11"><rect x="5.200" y="0" width="6.800" height="11" fill="#3cae7b"/><text x=".3" y="8" font-family="Liberation Mono, monospace" font-size="7" font-weight="bold" fill="#111">A</text><text x="6.500" y="8" font-family="Liberation Mono, monospace" font-size="7" font-weight="bold" fill="#eafff4">B</text><text x="12.600" y="8" font-family="Liberation Mono, monospace" font-size="7" font-weight="bold" fill="#111">C</text></svg>
<svg style="left:1121px;top:219px;" width="9" height="5" viewBox="0 0 9 5"><path d="M0 .5h9M0 3.500h9" stroke="#1c1c1c" stroke-width="1"/></svg>
<svg style="left:1154px;top:213px;" width="13" height="13" viewBox="0 0 13 13"><rect x=".5" y=".5" width="12" height="12" fill="#fff" stroke="#a7afc0"/><rect x="3" y="3" width="7" height="7" fill="#5d6885"/></svg>
<svg style="left:1180px;top:215px;overflow:visible;" width="17" height="11" viewBox="0 0 17 11"><rect x="5.200" y="0" width="6.800" height="11" fill="#3cae7b"/><text x=".3" y="8" font-family="Liberation Mono, monospace" font-size="7" font-weight="bold" fill="#111">A</text><text x="6.500" y="8" font-family="Liberation Mono, monospace" font-size="7" font-weight="bold" fill="#eafff4">B</text><text x="12.600" y="8" font-family="Liberation Mono, monospace" font-size="7" font-weight="bold" fill="#111">C</text></svg>
<svg style="left:1213px;top:219px;" width="9" height="5" viewBox="0 0 9 5"><path d="M0 .5h9M0 3.500h9" stroke="#1c1c1c" stroke-width="1"/></svg>
<svg style="left:1242px;top:219px;" width="9" height="5" viewBox="0 0 9 5"><path d="M0 .5h9M0 3.500h9" stroke="#1c1c1c" stroke-width="1"/></svg>
<div style="left:227px;top:189px;width:1px;height:264px;background:#cdd2e3"></div>
<div style="left:391px;top:189px;width:1px;height:264px;background:#cdd2e3"></div>
<div style="left:499px;top:189px;width:1px;height:264px;background:#cdd2e3"></div>
<div style="left:616px;top:189px;width:1px;height:264px;background:#cdd2e3"></div>
<div style="left:869px;top:189px;width:1px;height:264px;background:#cdd2e3"></div>
<div style="left:1020px;top:189px;width:1px;height:264px;background:#cdd2e3"></div>
<div style="left:1054px;top:189px;width:1px;height:264px;background:#cdd2e3"></div>
<div style="left:1083px;top:189px;width:1px;height:264px;background:#cdd2e3"></div>
<div style="left:1112px;top:189px;width:1px;height:264px;background:#cdd2e3"></div>
<div style="left:1146px;top:189px;width:1px;height:264px;background:#cdd2e3"></div>
<div style="left:1175px;top:189px;width:1px;height:264px;background:#cdd2e3"></div>
<div style="left:1204px;top:189px;width:1px;height:264px;background:#cdd2e3"></div>
<div style="left:1233px;top:189px;width:1px;height:264px;background:#cdd2e3"></div>
<div style="left:1272px;top:189px;width:1px;height:264px;background:#cdd2e3"></div>
<div style="left:208px;top:252px;width:1064px;height:1px;background:#cdd2e3"></div>
<span style="top:235px;font-size:11px;color:#1a5fc2;letter-spacing:-0.24px;left:231px;text-decoration:underline;text-decoration-color:#1a5fc2;text-underline-offset:1px;">V&amp;VZ SK s.r.o.</span>
<span style="top:235px;font-size:11px;color:#1a1a1a;letter-spacing:-0.12px;left:395px;">51281422</span>
<span style="top:235px;font-size:11px;color:#1a1a1a;letter-spacing:-0.21px;left:503px;">Bzince pod Javorinou</span>
<span style="top:235px;font-size:11px;color:#1a1a1a;letter-spacing:-0.11px;left:620px;">Hrubá Strana 1401, 916 11 Bzince pod Javorinou</span>
<span style="top:235px;font-size:11px;color:#1a1a1a;letter-spacing:0.02px;left:873px;">Ost.stav.kompletiz.práce</span>
<svg style="left:1063px;top:235px;" width="13" height="13" viewBox="0 0 13 13"><rect x=".5" y=".5" width="12" height="12" fill="#fff" stroke="#a7afc0"/></svg>
<span style="top:235px;font-size:11px;color:#1a1a1a;letter-spacing:-0.3px;right:165.3px;">1...</span>
<svg style="left:1155px;top:235px;" width="13" height="13" viewBox="0 0 13 13"><rect x=".5" y=".5" width="12" height="12" fill="#fff" stroke="#a7afc0"/></svg>
<span style="top:235px;font-size:11px;color:#1a1a1a;letter-spacing:-0.28px;left:1208px;">04...</span>
<div style="left:208px;top:273px;width:1064px;height:1px;background:#cdd2e3"></div>
<span style="top:256px;font-size:11px;color:#1a5fc2;letter-spacing:-0.08px;left:231px;text-decoration:underline;text-decoration-color:#1a5fc2;text-underline-offset:1px;">VAVOS spol. s r.o.</span>
<span style="top:256px;font-size:11px;color:#1a1a1a;letter-spacing:-0.12px;left:395px;">35821418</span>
<span style="top:256px;font-size:11px;color:#1a1a1a;letter-spacing:-0.23px;left:503px;">Bratislava</span>
<span style="top:256px;font-size:11px;color:#1a1a1a;letter-spacing:-0.08px;left:620px;">Súbežná 7/A, 811 04 Bratislava</span>
<span style="top:256px;font-size:11px;color:#1a1a1a;letter-spacing:-0.01px;left:873px;">Ost.špecializ.stav.práce</span>
<svg style="left:1063px;top:256px;" width="13" height="13" viewBox="0 0 13 13"><rect x=".5" y=".5" width="12" height="12" fill="#fff" stroke="#a7afc0"/></svg>
<span style="top:256px;font-size:11px;color:#1a1a1a;letter-spacing:-0.3px;right:165.3px;">1 ...</span>
<svg style="left:1155px;top:256px;" width="13" height="13" viewBox="0 0 13 13"><rect x=".5" y=".5" width="12" height="12" fill="#fff" stroke="#a7afc0"/></svg>
<span style="top:256px;font-size:11px;color:#1a1a1a;letter-spacing:-0.28px;left:1208px;">02...</span>
<div style="left:208px;top:294px;width:1064px;height:1px;background:#cdd2e3"></div>
<span style="top:277px;font-size:11px;color:#1a5fc2;letter-spacing:-0.58px;left:231px;text-decoration:underline;text-decoration-color:#1a5fc2;text-underline-offset:1px;">VENTIL-GH Gmbh.</span>
<span style="top:277px;font-size:11px;color:#1a1a1a;letter-spacing:-0.51px;left:503px;">Dresden</span>
<span style="top:277px;font-size:11px;color:#1a1a1a;letter-spacing:-0.12px;left:620px;">Langstrasse 1487-69/8877, Dresden, Nemecko</span>
<svg style="left:1063px;top:277px;" width="13" height="13" viewBox="0 0 13 13"><rect x=".5" y=".5" width="12" height="12" fill="#fff" stroke="#a7afc0"/></svg>
<svg style="left:1155px;top:277px;" width="13" height="13" viewBox="0 0 13 13"><rect x=".5" y=".5" width="12" height="12" fill="#fff" stroke="#a7afc0"/></svg>
<div style="left:208px;top:315px;width:1064px;height:1px;background:#cdd2e3"></div>
<span style="top:298px;font-size:11px;color:#1a5fc2;letter-spacing:-0.26px;left:231px;text-decoration:underline;text-decoration-color:#1a5fc2;text-underline-offset:1px;">VETSERVIS, s.r.o.</span>
<span style="top:298px;font-size:11px;color:#1a1a1a;letter-spacing:-0.12px;left:395px;">36682144</span>
<span style="top:298px;font-size:11px;color:#1a1a1a;letter-spacing:-0.25px;left:503px;">Nitra</span>
<span style="top:298px;font-size:11px;color:#1a1a1a;letter-spacing:-0.08px;left:620px;">Kalvária 3, 949 01 Nitra</span>
<span style="top:298px;font-size:11px;color:#1a1a1a;letter-spacing:0.01px;left:873px;">Veľkoobch.s farmac.tov.</span>
<svg style="left:1063px;top:298px;" width="13" height="13" viewBox="0 0 13 13"><rect x=".5" y=".5" width="12" height="12" fill="#fff" stroke="#a7afc0"/><path d="M3 6.500l2.500 3 4.500-6" stroke="#555d70" stroke-width="1.300" fill="none"/></svg>
<svg style="left:1155px;top:298px;" width="13" height="13" viewBox="0 0 13 13"><rect x=".5" y=".5" width="12" height="12" fill="#fff" stroke="#a7afc0"/></svg>
<span style="top:298px;font-size:11px;color:#1a1a1a;letter-spacing:-0.28px;left:1208px;">03...</span>
<div style="left:208px;top:336px;width:1064px;height:1px;background:#cdd2e3"></div>
<span style="top:319px;font-size:11px;color:#1a5fc2;letter-spacing:0.01px;left:231px;text-decoration:underline;text-decoration-color:#1a5fc2;text-underline-offset:1px;">VONA Nitra s. r. o.</span>
<span style="top:319px;font-size:11px;color:#1a1a1a;letter-spacing:-0.12px;left:395px;">46470310</span>
<span style="top:319px;font-size:11px;color:#1a1a1a;letter-spacing:-0.25px;left:503px;">Nitra</span>
<span style="top:319px;font-size:11px;color:#1a1a1a;letter-spacing:-0.09px;left:620px;">Rastislavova 16, 949 01 Nitra</span>
<span style="top:319px;font-size:11px;color:#1a1a1a;letter-spacing:-0.3px;left:873px;">Pilovanie</span>
<div style="left:208px;top:357px;width:1064px;height:1px;background:#cdd2e3"></div>
<span style="top:340px;font-size:11px;color:#1a5fc2;letter-spacing:-0.09px;left:231px;text-decoration:underline;text-decoration-color:#1a5fc2;text-underline-offset:1px;">Všeobecná zdravotná poisťovňa</span>
<span style="top:340px;font-size:11px;color:#1a1a1a;letter-spacing:-0.12px;left:395px;">35937874</span>
<div style="left:208px;top:378px;width:1064px;height:1px;background:#cdd2e3"></div>
<span style="top:361px;font-size:11px;color:#1a5fc2;letter-spacing:-0.27px;left:231px;text-decoration:underline;text-decoration-color:#1a5fc2;text-underline-offset:1px;">VÚB Generali dôchodková sprá...</span>
<span style="top:361px;font-size:11px;color:#1a1a1a;letter-spacing:-0.23px;left:503px;">Bratislava</span>
<span style="top:361px;font-size:11px;color:#1a1a1a;letter-spacing:-0.1px;left:620px;">Mlynské nivy 1, 82004 Bratislava</span>
<div style="left:208px;top:399px;width:1064px;height:1px;background:#cdd2e3"></div>
<div style="left:391px;top:379px;width:108px;height:20px;background:#fdf6dd"></div>
<span style="top:382px;font-size:11px;color:#1a5fc2;letter-spacing:-0.21px;left:231px;text-decoration:underline;text-decoration-color:#1a5fc2;text-underline-offset:1px;">WOODHOUSE, s.r.o.</span>
<span style="top:382px;font-size:11px;color:#1a1a1a;letter-spacing:-0.12px;left:395px;">36555185</span>
<span style="top:382px;font-size:11px;color:#1a1a1a;letter-spacing:-0.25px;left:503px;">Nitra</span>
<span style="top:382px;font-size:11px;color:#1a1a1a;letter-spacing:-0.0px;left:620px;">Pod trnkami 12, 949 01 Nitra</span>
<span style="top:382px;font-size:11px;color:#1a1a1a;letter-spacing:-0.3px;left:873px;">Výstavba</span>
<div style="left:208px;top:420px;width:1064px;height:1px;background:#cdd2e3"></div>
<span style="top:403px;font-size:11px;color:#1a5fc2;letter-spacing:-0.61px;left:231px;text-decoration:underline;text-decoration-color:#1a5fc2;text-underline-offset:1px;">WUEN CHAVT</span>
<div style="left:208px;top:441px;width:1064px;height:1px;background:#cdd2e3"></div>
<span style="top:424px;font-size:11px;color:#1a5fc2;letter-spacing:0.22px;left:231px;text-decoration:underline;text-decoration-color:#1a5fc2;text-underline-offset:1px;">ZAMAT, s.r.o.</span>
<span style="top:424px;font-size:11px;color:#1a1a1a;letter-spacing:-0.12px;left:395px;">36314404</span>
<span style="top:424px;font-size:11px;color:#1a1a1a;letter-spacing:-0.36px;left:503px;">Prievidza</span>
<span style="top:424px;font-size:11px;color:#1a1a1a;letter-spacing:-0.11px;left:620px;">Nadjazdová 1, 971 01 Prievidza</span>
<span style="top:424px;font-size:11px;color:#1a1a1a;letter-spacing:-0.3px;left:873px;">Veľkoobchod</span>
<div style="left:208px;top:462px;width:1064px;height:1px;background:#cdd2e3"></div>
<span style="top:445px;font-size:11px;color:#1a5fc2;letter-spacing:0.03px;left:231px;text-decoration:underline;text-decoration-color:#1a5fc2;text-underline-offset:1px;">Zdravotná poisťovňa Dôvera</span>
<span style="top:445px;font-size:11px;color:#1a1a1a;letter-spacing:-0.12px;left:395px;">35942436</span>
<span style="top:445px;font-size:11px;color:#1a1a1a;letter-spacing:-0.3px;left:873px;">Povinné</span>
<div style="left:227px;top:378px;width:1045px;height:22px;border:1px dashed #555;"></div>
<div style="left:392px;top:380px;width:106px;height:18px;border:1px dotted #8a8266;"></div>
<svg style="left:218px;top:385px;" width="5" height="8" viewBox="0 0 5 8"><path d="M0 0l4.500 4-4.500 4z" fill="#333"/></svg>
<svg style="left:1277px;top:215px;" width="9" height="6" viewBox="0 0 9 6"><path d="M0 5.500h9L4.500 .5z" fill="#66738f"/></svg>
<div style="left:208px;top:189px;width:1082px;height:665px;border:1px solid #b3bbcc;border-top:none;"></div>
<div style="left:208px;top:453px;width:1076px;height:382px;background:#fff"></div>
<div style="left:214px;top:832px;width:1070px;height:16px;background:#fff;border:1px solid #b3bbcc;border-top:none"></div>
<div style="left:208px;top:452px;width:893px;height:384px;background:#d6dcea;border:1px solid #3d4250;"></div>
<svg style="left:218px;top:464px;overflow:visible;" width="16" height="16" viewBox="0 0 16 16"><path d="M1 9l9-3.500 5 2v5l-9 3-5-2z" fill="#d4d4d4" stroke="#888" stroke-width=".8"/><path d="M6 11l9-3.500v5l-9 3z" fill="#9c9c9c"/><path d="M1 9l5 2 9-3.500" fill="none" stroke="#777" stroke-width=".6"/><rect x="4" y="1.500" width="2" height="6.500" fill="#bdbdbd" stroke="#808080" stroke-width=".5"/><rect x="7" y="4" width="1.500" height="3" fill="#aaa"/><rect x="2" y="11" width="1" height="1" fill="#444"/><rect x="3.800" y="11.700" width="1" height="1" fill="#444"/></svg>
<span style="top:463px;font-size:15px;color:#969db0;letter-spacing:-1.03px;left:239px;line-height:18px;height:18px;">WOODHOUSE, s.r.o.</span>
<div style="left:215px;top:491px;width:880px;height:338px;border:1px solid #a4acbc;background:#d6dcea"></div>
<svg style="left:225px;top:499px;overflow:visible;" width="12" height="15" viewBox="0 0 12 15"><path d="M4 .5h7.500v14h-11v-10.500z" fill="#d9d9d9" stroke="#c6c6c6"/><path d="M4 .5v3.500h-3.500" fill="#e6e6e6" stroke="#c6c6c6" stroke-width=".8"/></svg>
<svg style="left:250px;top:499px;overflow:visible;" width="14" height="14" viewBox="0 0 14 14"><defs><linearGradient id="sv" x1="0" y1="0" x2="0" y2="1"><stop offset="0" stop-color="#5a9cf2"/><stop offset="1" stop-color="#2f6fd6"/></linearGradient></defs><rect x=".5" y=".5" width="13" height="13" rx="1.500" fill="url(#sv)" stroke="#2a5fbb"/><rect x="3" y="1" width="8" height="5.500" fill="#fff"/><path d="M4 2.800h6M4 4.800h6" stroke="#8f949e" stroke-width=".9"/><rect x="3" y="8.500" width="8" height="5" fill="#161616"/><rect x="8.300" y="9.500" width="1.600" height="3" fill="#e8eefb"/></svg>
<svg style="left:276px;top:497px;overflow:visible;" width="16" height="16" viewBox="0 0 16 16"><rect x=".5" y="2.500" width="13" height="13" rx="1.500" fill="url(#sv)" stroke="#2a5fbb"/><rect x="3" y="3" width="6" height="5.500" fill="#fff"/><path d="M4 4.800h4M4 6.800h4" stroke="#8f949e" stroke-width=".9"/><rect x="3" y="10.500" width="8" height="5" fill="#161616"/><rect x="8.300" y="11.500" width="1.600" height="3" fill="#e8eefb"/><rect x="7.800" y=".5" width="7.700" height="7.700" rx="1.500" fill="#e22a2a" stroke="#a81515" stroke-width=".7"/><path d="M9.700 2.400l3.900 3.900M13.600 2.400l-3.900 3.900" stroke="#fff" stroke-width="1.500"/></svg>
<svg style="left:302px;top:499px;overflow:visible;" width="14" height="14" viewBox="0 0 14 14"><path d="M1.500 1.500v11h3.500M1.500 6.500h3.500" stroke="#7b7f88" fill="none" stroke-width="1.100"/><circle cx="1.500" cy="1.500" r="1.300" fill="#8a8e97" stroke="#666a73" stroke-width=".6"/><circle cx="5.500" cy="6.500" r="1.300" fill="#8a8e97" stroke="#666a73" stroke-width=".6"/><circle cx="5.500" cy="12.500" r="1.300" fill="#8a8e97" stroke="#666a73" stroke-width=".6"/><path d="M4.500 1.500h9M8.500 6.500h5M8.500 12.500h5" stroke="#f6bd3f" stroke-width="1.700"/></svg>
<svg style="left:328px;top:498px;overflow:visible;" width="14" height="16" viewBox="0 0 14 16"><defs><linearGradient id="gl" x1="0" y1="0" x2="1" y2="0"><stop offset="0" stop-color="#2fb47c" stop-opacity=".35"/><stop offset=".35" stop-color="#2fb47c"/><stop offset="1" stop-color="#2aa872"/></linearGradient></defs><rect x="0" y="0" width="14" height="2.600" fill="#2fb47c"/><rect x="3" y="5.500" width="10.500" height="2.600" fill="url(#gl)"/><rect x="1" y="11" width="12" height="2.600" fill="url(#gl)"/><rect x="1" y="2.600" width="12.500" height="1.600" fill="#9fdcc0" opacity=".7"/><rect x="4" y="8.100" width="9" height="1.600" fill="#9fdcc0" opacity=".7"/><rect x="2" y="13.600" width="10.500" height="1.800" fill="#9fdcc0" opacity=".7"/></svg>
<div style="left:219px;top:523px;width:874px;height:22px;background:#7fbde1"></div>
<span style="top:525px;font-size:15px;color:#4b4c56;letter-spacing:-0.35px;font-weight:bold;left:576px;line-height:18px;height:18px;">WOODHOUSE, s.r.o.</span>
<div style="left:229px;top:585px;width:870px;height:178px;border:1px solid #a4acbc;background:#d6dcea"></div>
<div style="left:229px;top:560px;width:88px;height:26px;border:1px solid #a4acbc;background:#d1d7e6"></div>
<span style="top:565px;font-size:11px;color:#1a1a1a;letter-spacing:-0.25px;left:240px;">Organizácia</span>
<div style="left:318px;top:560px;width:85px;height:26px;border:1px solid #a4acbc;background:#d1d7e6"></div>
<span style="top:565px;font-size:11px;color:#1a1a1a;letter-spacing:-0.2px;left:328px;">Kategorizácia</span>
<div style="left:404px;top:560px;width:105px;height:26px;border:1px solid #a4acbc;background:#d1d7e6"></div>
<span style="top:565px;font-size:11px;color:#1a1a1a;letter-spacing:-0.06px;left:414px;">Fakturačné údaje</span>
<div style="left:508px;top:560px;width:97px;height:26px;border:1px solid #a4acbc;border-bottom:none;background:#d6dcea"></div>
<span style="top:565px;font-size:11px;color:#1a1a1a;letter-spacing:0.09px;left:520px;">Zľavy a kredity</span>
<div style="left:604px;top:560px;width:102px;height:26px;border:1px solid #a4acbc;background:#d1d7e6"></div>
<span style="top:565px;font-size:11px;color:#1a1a1a;letter-spacing:-0.13px;left:614px;">Doplnkové údaje</span>
<span style="top:598px;font-size:11px;color:#111;letter-spacing:0.5px;font-weight:bold;left:241px;">Zľavy</span>
<span style="top:618px;font-size:11px;color:#1a1a1a;letter-spacing:0.15px;left:241px;">Zľava odberateľa %</span>
<div style="left:345px;top:615px;width:113px;height:20px;background:#fff;border:1px solid #aab3c4"></div>
<span style="top:618px;font-size:11px;color:#1a1a1a;letter-spacing:-0.3px;right:854.3px;">0</span>
<span style="top:618px;font-size:11px;color:#1a1a1a;letter-spacing:0.27px;left:471px;">Obrat.zľava</span>
<div style="left:564px;top:615px;width:155px;height:20px;background:#fff;border:1px solid #aab3c4"></div>
<span style="top:618px;font-size:11px;color:#1a1a1a;letter-spacing:-0.3px;left:568px;">-</span>
<svg style="left:707px;top:623px;" width="7" height="4" viewBox="0 0 7 4"><path d="M0 0h7L3.5 4z" fill="#6c7486"/></svg>
<div style="left:733px;top:615px;width:200px;height:23px;background:#fdf1b8;border:1px solid #f0d376"></div>
<span style="top:619px;font-size:11px;color:#1a1a1a;letter-spacing:0.04px;left:737px;">Zľavy na tovarové skupiny a kategórie</span>
<svg style="left:242px;top:654px;" width="13" height="13" viewBox="0 0 13 13"><rect x=".5" y=".5" width="12" height="12" fill="#fff" stroke="#a7afc0"/></svg>
<span style="top:654px;font-size:11px;color:#1a1a1a;letter-spacing:-0.05px;left:259px;">Zakázaný predaj na faktúru</span>
<svg style="left:473px;top:654px;" width="13" height="13" viewBox="0 0 13 13"><rect x=".5" y=".5" width="12" height="12" fill="#fff" stroke="#a7afc0"/></svg>
<span style="top:654px;font-size:11px;color:#1a1a1a;letter-spacing:0.05px;left:489px;">Individuálny kredit</span>
<span style="top:677px;font-size:11px;color:#a0a7b7;letter-spacing:-0.08px;left:241px;">Ak vystavené neuhradené faktúry a DL prekroča sumu</span>
<div style="left:508px;top:675px;width:50px;height:20px;background:#d9dfec;border:1px solid #b4bccb"></div>
<span style="top:678px;font-size:11px;color:#7f8698;letter-spacing:-0.3px;right:755.3px;">0</span>
<span style="top:677px;font-size:11px;color:#a0a7b7;letter-spacing:-0.09px;left:562px;">alebo pohľadávky</span>
<div style="left:653px;top:675px;width:138px;height:20px;background:#d9dfec;border:1px solid #b4bccb"></div>
<span style="top:678px;font-size:11px;color:#7f8698;letter-spacing:-0.3px;right:521.3px;">0</span>
<span style="top:677px;font-size:11px;color:#a0a7b7;letter-spacing:-0.2px;left:795px;">dní  po splatnosti prekročia</span>
<span style="top:700px;font-size:11px;color:#a0a7b7;letter-spacing:0.04px;left:241px;">tak pri vystavených faktúrach</span>
<div style="left:390px;top:698px;width:192px;height:20px;background:#d9dfec;border:1px solid #b4bccb"></div>
<span style="top:701px;font-size:11px;color:#8b92a4;letter-spacing:-0.36px;left:394px;">Žiadna akcia</span>
<svg style="left:570px;top:706px;" width="7" height="4" viewBox="0 0 7 4"><path d="M0 0h7L3.5 4z" fill="#a3aabb"/></svg>
<span style="top:700px;font-size:11px;color:#a0a7b7;letter-spacing:-0.16px;left:586px;">a objednávkach došlých</span>
<div style="left:706px;top:698px;width:192px;height:20px;background:#d9dfec;border:1px solid #b4bccb"></div>
<span style="top:701px;font-size:11px;color:#8b92a4;letter-spacing:-0.36px;left:710px;">Žiadna akcia</span>
<svg style="left:242px;top:725px;" width="13" height="13" viewBox="0 0 13 13"><rect x=".5" y=".5" width="12" height="12" fill="#e9ecf3" stroke="#c3c8d4"/></svg>
<span style="top:725px;font-size:11px;color:#70778a;letter-spacing:-0.1px;left:259px;">K sume pohľadávok po splatnosti pripočítať sumu nevybavených objednávok</span>
<svg style="left:636px;top:768px;" width="19" height="6" viewBox="0 0 19 6"><g fill="#aeb4c4"><circle cx="1.500" cy="1.500" r=".8"/><circle cx="5.500" cy="1.500" r=".8"/><circle cx="9.500" cy="1.500" r=".8"/><circle cx="13.500" cy="1.500" r=".8"/><circle cx="17.500" cy="1.500" r=".8"/><circle cx="3.500" cy="4.500" r=".8"/><circle cx="7.500" cy="4.500" r=".8"/><circle cx="11.500" cy="4.500" r=".8"/><circle cx="15.500" cy="4.500" r=".8"/></g></svg>
<div style="left:464px;top:791px;width:90px;height:30px;background:#d1d7e6;border:1px solid #a9b1c2"></div>
<div style="left:560px;top:791px;width:90px;height:30px;background:#d1d7e6;border:1px solid #a9b1c2"></div>
<div style="left:656px;top:791px;width:90px;height:30px;background:#d1d7e6;border:1px solid #a9b1c2"></div>
<div style="left:752px;top:791px;width:90px;height:30px;background:#d1d7e6;border:1px solid #a9b1c2"></div>
<svg style="left:468px;top:799px;" width="15" height="15" viewBox="0 0 15 15"><defs><radialGradient id="gg" cx=".4" cy=".3" r=".8"><stop offset="0" stop-color="#9be36a"/><stop offset="1" stop-color="#2f9a1d"/></radialGradient></defs><circle cx="7.500" cy="7.500" r="7" fill="url(#gg)" stroke="#2b7d1a" stroke-width=".8"/><path d="M11 7.500h-6M7.500 4.500l-3 3 3 3" stroke="#fff" stroke-width="1.800" fill="none"/></svg>
<span style="top:799px;font-size:11px;color:#1a1a1a;letter-spacing:-0.1px;left:497px;">Predošlý</span>
<span style="top:799px;font-size:11px;color:#1a1a1a;letter-spacing:-0.21px;left:583px;">Ďalší</span>
<svg style="left:632px;top:799px;" width="15" height="15" viewBox="0 0 15 15"><defs><radialGradient id="gg2" cx=".4" cy=".3" r=".8"><stop offset="0" stop-color="#9be36a"/><stop offset="1" stop-color="#2f9a1d"/></radialGradient></defs><circle cx="7.500" cy="7.500" r="7" fill="url(#gg2)" stroke="#2b7d1a" stroke-width=".8"/><path d="M4 7.500h6M7.500 4.500l3 3-3 3" stroke="#fff" stroke-width="1.800" fill="none"/></svg>
<svg style="left:660px;top:797px;overflow:visible;" width="16" height="16" viewBox="0 0 16 16"><rect x=".5" y="2.500" width="13" height="13" rx="1.500" fill="url(#sv)" stroke="#2a5fbb"/><rect x="3" y="3" width="6" height="5.500" fill="#fff"/><path d="M4 4.800h4M4 6.800h4" stroke="#8f949e" stroke-width=".9"/><rect x="3" y="10.500" width="8" height="5" fill="#161616"/><rect x="8.300" y="11.500" width="1.600" height="3" fill="#e8eefb"/><rect x="7.800" y=".5" width="7.700" height="7.700" rx="1.500" fill="#e22a2a" stroke="#a81515" stroke-width=".7"/><path d="M9.700 2.400l3.900 3.900M13.600 2.400l-3.900 3.900" stroke="#fff" stroke-width="1.500"/></svg>
<span style="top:799px;font-size:11px;color:#1a1a1a;letter-spacing:0.07px;left:695px;">Uložiť</span>
<svg style="left:756px;top:799px;" width="15" height="15" viewBox="0 0 15 15"><rect x=".5" y=".5" width="14" height="14" rx="2.500" fill="#e2382b" stroke="#a61c12"/><path d="M4 4l7 7M11 4l-7 7" stroke="#fff" stroke-width="2.200" stroke-linecap="round"/></svg>
<span style="top:799px;font-size:11px;color:#1a1a1a;letter-spacing:0.4px;left:791px;">Zrušiť</span>
<div style="left:893px;top:309px;width:397px;height:524px;background:#c5cce2;border:1px solid #2d3648;"></div>
<svg style="left:903px;top:321px;overflow:visible;" width="16" height="16" viewBox="0 0 16 16"><rect x=".5" y=".5" width="13" height="12" fill="#fff" stroke="#9aa7c4"/><rect x="1" y="1" width="12" height="3" fill="#5f86d3"/><path d="M3.500 5h4v3.500h2.500l-4.500 4.500-4.500-4.500h2.500z" fill="#e8452c" stroke="#b52a18" stroke-width=".5"/><rect x="9" y="8" width="7" height="8" fill="#fff" opacity=".9"/><text x="16.2" y="15.5" font-family="Liberation Sans, sans-serif" font-weight="bold" font-size="8.5" text-anchor="end" fill="#111">T</text></svg>
<span style="top:319px;font-size:15px;color:#2f3442;letter-spacing:-0.34px;left:923px;line-height:20px;height:20px;">Tovarovo-odberateľské zľavy</span>
<div style="left:1185px;top:329px;width:9px;height:3px;background:#111"></div>
<div style="left:1221px;top:324px;width:9px;height:9px;border:1px solid #111;border-top-width:2px;"></div>
<svg style="left:1259px;top:324px;" width="9" height="9" viewBox="0 0 9 9"><path d="M1 1L8 8M8 1L1 8" stroke="#111" stroke-width="1.900"/></svg>
<div style="left:901px;top:348px;width:382px;height:478px;background:#d9dfed;border:1px solid #aab2c6"></div>
<span style="top:358px;font-size:15px;color:#3d3f4a;letter-spacing:-0.0px;font-weight:bold;left:976px;line-height:20px;height:20px;">Tovarovo-odberateľské zľavy</span>
<svg style="left:1264px;top:366px;" width="5" height="3" viewBox="0 0 5 3"><path d="M0 0h5L2.5 3z" fill="#222"/></svg>
<svg style="left:913px;top:393px;overflow:visible;" width="9" height="7" viewBox="0 0 9 7"><path d="M0 .5h9M0 3.500h9M0 6.500h9" stroke="#1c1c1c" stroke-width="1"/></svg>
<div style="left:931px;top:384px;width:1px;height:25px;background:#9aa3b5"></div>
<svg style="left:942px;top:389px;overflow:visible;" width="12" height="15" viewBox="0 0 12 15"><defs><linearGradient id="gn" x1="0" y1="0" x2="1" y2="1"><stop offset="0" stop-color="#fff"/><stop offset="1" stop-color="#cfe2fb"/></linearGradient></defs><path d="M.5 .5h7.500l3.500 3.500v10.500h-11z" fill="url(#gn)" stroke="#4f86d9"/><path d="M8 .5v3.500h3.500" fill="#e6f0ff" stroke="#4f86d9" stroke-width=".8"/></svg>
<svg style="left:967px;top:395px;" width="5" height="3" viewBox="0 0 5 3"><path d="M0 0h5L2.5 3z" fill="#333"/></svg>
<svg style="left:983px;top:390px;overflow:visible;" width="16" height="13" viewBox="0 0 16 13"><path d="M.5 12.500v-11h5l1.500 2h6v2" fill="#f6c463" stroke="#c8861a"/><path d="M.5 12.500l2.500-7.500h13l-3 7.500z" fill="#fbd98a" stroke="#c8861a" stroke-linejoin="round"/></svg>
<svg style="left:1009px;top:388px;overflow:visible;" width="16" height="16" viewBox="0 0 16 16"><path d="M1 15L14 1.500" stroke="#d91f1f" stroke-width="2.200" stroke-linecap="round"/><path d="M2.500 1L15 15.500" stroke="#d62b2b" stroke-width="1.300" stroke-linecap="round"/></svg>
<svg style="left:1035px;top:389px;overflow:visible;" width="17" height="15" viewBox="0 0 17 15"><path d="M14 6.500A6.200 5.500 0 0 0 3 4.800" fill="none" stroke="#3aa836" stroke-width="3.200"/><path d="M-.5 3l2 6.500 5.500-3z" fill="#3aa836"/><path d="M3 9.500A6.200 5.500 0 0 0 14 11" fill="none" stroke="#62c95a" stroke-width="3.200"/><path d="M17.500 13l-2-6.500-5.500 3z" fill="#62c95a"/></svg>
<div style="left:1059px;top:384px;width:1px;height:25px;background:#9aa3b5"></div>
<svg style="left:1069px;top:389px;overflow:visible;" width="14" height="14" viewBox="0 0 14 14"><rect x="3.500" y=".5" width="7" height="6" fill="#fff" stroke="#6b8fd0"/><path d="M5 2.500h4M5 4.500h4" stroke="#9db6e4" stroke-width=".8"/><rect x=".5" y="6.500" width="13" height="6" rx="1" fill="#e4e4e4" stroke="#7b7b7b"/><rect x="2.500" y="10.500" width="9" height="3" fill="#fafafa" stroke="#8a8a8a" stroke-width=".8"/><rect x="10" y="8" width="1.500" height="1" fill="#46b446"/></svg>
<span style="top:389px;font-size:11px;color:#1a1a1a;letter-spacing:-0.45px;left:1088px;">Tlač</span>
<svg style="left:1117px;top:388px;overflow:visible;" width="16" height="16" viewBox="0 0 16 16"><rect x="1" y="5" width="5.500" height="10" rx="1.500" fill="#2e5da8" stroke="#173a73" stroke-width=".8"/><rect x="9.500" y="5" width="5.500" height="10" rx="1.500" fill="#2e5da8" stroke="#173a73" stroke-width=".8"/><rect x="3" y="1" width="3.500" height="5" fill="#3b6dbb" stroke="#173a73" stroke-width=".8"/><rect x="9.500" y="1" width="3.500" height="5" fill="#3b6dbb" stroke="#173a73" stroke-width=".8"/><rect x="6.500" y="6" width="3" height="4" fill="#173a73"/><path d="M2.500 7v6M11 7v6" stroke="#9cbcf0" stroke-width="1.200"/></svg>
<div style="left:1138px;top:384px;width:26px;height:25px;background:#fbe8a3;border:1px solid #f3cf66"></div>
<svg style="left:1143px;top:389px;overflow:visible;" width="16" height="16" viewBox="0 0 16 16"><defs><linearGradient id="fg" x1="0" y1="0" x2="0" y2="1"><stop offset="0" stop-color="#fde9a8"/><stop offset="1" stop-color="#f7b73a"/></linearGradient></defs><path d="M1 1.500h14l-5.300 6.300v5.700l-3.400-1.200v-4.500z" fill="url(#fg)" stroke="#e8871a" stroke-width="1.300" stroke-linejoin="round"/><path d="M3.500 3h9" stroke="#fff8dc" stroke-width="1"/></svg>
<div style="left:1167px;top:384px;width:1px;height:25px;background:#9aa3b5"></div>
<svg style="left:1178px;top:388px;overflow:visible;" width="16" height="16" viewBox="0 0 16 16"><path d="M2 14.500l8.500-8.500" stroke="#c9a15a" stroke-width="2.400" stroke-linecap="round"/><path d="M8 2l5 3.500-1.800 2.200-4.700-3.500z" fill="#9aa1ad" stroke="#5b616c" stroke-width=".7"/><path d="M14 14.500l-8.500-8.500" stroke="#8a919d" stroke-width="1.800" stroke-linecap="round"/><path d="M2 1.500a3 3 0 0 0 3.500 4.500l1-1-2-2 .5-2.500a3 3 0 0 0-3 1z" fill="#b4bac6" stroke="#5b616c" stroke-width=".7"/></svg>
<span style="top:389px;font-size:11px;color:#1a1a1a;letter-spacing:-0.22px;left:1197px;">Funkcie</span>
<svg style="left:1237px;top:395px;" width="5" height="3" viewBox="0 0 5 3"><path d="M0 0h5L2.5 3z" fill="#333"/></svg>
<div style="left:1263px;top:382px;width:14px;height:28px;background:#d3d9e9"></div>
<svg style="left:1266px;top:393px;" width="9" height="8" viewBox="0 0 9 8"><path d="M0 1h9" stroke="#222" stroke-width="1.400"/><path d="M0 3.500h9L4.500 8z" fill="#222"/></svg>
<div style="left:907px;top:411px;width:370px;height:378px;background:#fff"></div>
<div style="left:907px;top:411px;width:370px;height:21px;background:#f8f9fd;border-top:1px solid #b3bbcc;border-bottom:1px solid #cdd2e3"></div>
<svg style="left:911px;top:416px;" width="10" height="10" viewBox="0 0 10 10"><circle cx="5" cy="5" r="3.600" fill="#fff" stroke="#a3a9b8" stroke-width="1.200" stroke-dasharray="1.900 .9"/><circle cx="5" cy="5" r="1.200" fill="#d0d4df"/></svg>
<span style="top:414px;font-size:11px;color:#1a1a1a;letter-spacing:-0.25px;left:929px;">Skupina</span>
<span style="top:414px;font-size:11px;color:#111;letter-spacing:0.74px;font-weight:bold;right:50.26px;">Zľava</span>
<div style="left:907px;top:432px;width:352px;height:21px;background:#eff3fc;border-bottom:1px solid #b9c0d4"></div>
<svg style="left:913px;top:439px;" width="6" height="8" viewBox="0 0 6 8"><ellipse cx="3" cy="2.200" rx="2.700" ry="2.200" fill="#1a2233"/><path d="M3 3.500v4" stroke="#1a2233" stroke-width="1.400"/><ellipse cx="3" cy="1.800" rx="1.200" ry=".7" fill="#eff3fc"/></svg>
<svg style="left:930px;top:437px;overflow:visible;" width="17" height="11" viewBox="0 0 17 11"><rect x="5.200" y="0" width="6.800" height="11" fill="#3cae7b"/><text x=".3" y="8" font-family="Liberation Mono, monospace" font-size="7" font-weight="bold" fill="#111">A</text><text x="6.500" y="8" font-family="Liberation Mono, monospace" font-size="7" font-weight="bold" fill="#eafff4">B</text><text x="12.600" y="8" font-family="Liberation Mono, monospace" font-size="7" font-weight="bold" fill="#111">C</text></svg>
<svg style="left:1164px;top:441px;" width="9" height="5" viewBox="0 0 9 5"><path d="M0 .5h9M0 3.500h9" stroke="#1c1c1c" stroke-width="1"/></svg>
<div style="left:1259px;top:432px;width:18px;height:357px;background:#d9deec"></div>
<div style="left:907px;top:474px;width:352px;height:1px;background:#cdd2e3"></div>
<span style="top:457px;font-size:11px;color:#1a1a1a;letter-spacing:0.03px;left:929px;">Látky | Látky</span>
<span style="top:457px;font-size:11px;color:#111;letter-spacing:0.69px;font-weight:bold;right:50.31px;">5,000</span>
<div style="left:907px;top:495px;width:352px;height:1px;background:#cdd2e3"></div>
<span style="top:478px;font-size:11px;color:#1a1a1a;letter-spacing:-0.17px;left:929px;">LAB | Laboratórne pomôcky</span>
<span style="top:478px;font-size:11px;color:#111;letter-spacing:0.72px;font-weight:bold;right:50.28px;">10,000</span>
<div style="left:907px;top:516px;width:352px;height:1px;background:#cdd2e3"></div>
<span style="top:499px;font-size:11px;color:#1a1a1a;letter-spacing:-0.24px;left:929px;">KUCHNAB | Kuchynský nábytok</span>
<span style="top:499px;font-size:11px;color:#111;letter-spacing:0.72px;font-weight:bold;right:50.28px;">10,000</span>
<div style="left:907px;top:537px;width:352px;height:1px;background:#cdd2e3"></div>
<span style="top:520px;font-size:11px;color:#1a1a1a;letter-spacing:-0.29px;left:929px;">KUCHN | Kuchynské nádoby</span>
<span style="top:520px;font-size:11px;color:#111;letter-spacing:0.69px;font-weight:bold;right:50.31px;">5,000</span>
<div style="left:907px;top:558px;width:352px;height:1px;background:#cdd2e3"></div>
<span style="top:541px;font-size:11px;color:#1a1a1a;letter-spacing:-0.39px;left:929px;">KRM | Krmivo</span>
<svg style="left:1159px;top:540px;overflow:visible;" width="16" height="16" viewBox="0 0 16 16"><path d="M8 1l7.300 13.500h-14.600z" fill="#f2b04c" stroke="#f2b04c" stroke-width="1" stroke-linejoin="round"/><path d="M8 5.500v5" stroke="#fff" stroke-width="1.800"/><rect x="7.100" y="11.500" width="1.800" height="1.800" fill="#fff"/></svg>
<div style="left:907px;top:579px;width:352px;height:1px;background:#cdd2e3"></div>
<span style="top:562px;font-size:11px;color:#1a1a1a;letter-spacing:-0.23px;left:929px;">KOR | Koreniny</span>
<svg style="left:1159px;top:561px;overflow:visible;" width="16" height="16" viewBox="0 0 16 16"><path d="M8 1l7.300 13.500h-14.600z" fill="#f2b04c" stroke="#f2b04c" stroke-width="1" stroke-linejoin="round"/><path d="M8 5.500v5" stroke="#fff" stroke-width="1.800"/><rect x="7.100" y="11.500" width="1.800" height="1.800" fill="#fff"/></svg>
<div style="left:907px;top:600px;width:352px;height:1px;background:#cdd2e3"></div>
<span style="top:583px;font-size:11px;color:#1a1a1a;letter-spacing:-0.22px;left:929px;">KA | Káble</span>
<span style="top:583px;font-size:11px;color:#111;letter-spacing:0.72px;font-weight:bold;right:50.28px;">10,000</span>
<div style="left:907px;top:621px;width:352px;height:1px;background:#cdd2e3"></div>
<span style="top:604px;font-size:11px;color:#1a1a1a;letter-spacing:-0.37px;left:929px;">HMOZD | Hmoždínky</span>
<svg style="left:1159px;top:603px;overflow:visible;" width="16" height="16" viewBox="0 0 16 16"><path d="M8 1l7.300 13.500h-14.600z" fill="#f2b04c" stroke="#f2b04c" stroke-width="1" stroke-linejoin="round"/><path d="M8 5.500v5" stroke="#fff" stroke-width="1.800"/><rect x="7.100" y="11.500" width="1.800" height="1.800" fill="#fff"/></svg>
<div style="left:907px;top:642px;width:352px;height:1px;background:#cdd2e3"></div>
<span style="top:625px;font-size:11px;color:#1a1a1a;letter-spacing:-0.12px;left:929px;">FOTO | Fototechnika</span>
<svg style="left:1159px;top:624px;overflow:visible;" width="16" height="16" viewBox="0 0 16 16"><path d="M8 1l7.300 13.500h-14.600z" fill="#f2b04c" stroke="#f2b04c" stroke-width="1" stroke-linejoin="round"/><path d="M8 5.500v5" stroke="#fff" stroke-width="1.800"/><rect x="7.100" y="11.500" width="1.800" height="1.800" fill="#fff"/></svg>
<div style="left:907px;top:663px;width:352px;height:1px;background:#cdd2e3"></div>
<span style="top:646px;font-size:11px;color:#1a1a1a;letter-spacing:-0.28px;left:929px;">EZS | EZS zabezpečovacie systémy</span>
<span style="top:646px;font-size:11px;color:#111;letter-spacing:0.69px;font-weight:bold;right:50.31px;">5,000</span>
<div style="left:907px;top:684px;width:352px;height:1px;background:#cdd2e3"></div>
<span style="top:667px;font-size:11px;color:#1a1a1a;letter-spacing:-0.25px;left:929px;">ELEK | Elektrospotrebiče</span>
<span style="top:667px;font-size:11px;color:#111;letter-spacing:0.69px;font-weight:bold;right:50.31px;">7,000</span>
<div style="left:907px;top:705px;width:352px;height:1px;background:#cdd2e3"></div>
<span style="top:688px;font-size:11px;color:#1a1a1a;letter-spacing:-0.4px;left:929px;">DVERE | Dvere</span>
<span style="top:688px;font-size:11px;color:#111;letter-spacing:0.72px;font-weight:bold;right:50.28px;">10,000</span>
<div style="left:907px;top:726px;width:352px;height:1px;background:#cdd2e3"></div>
<span style="top:709px;font-size:11px;color:#1a1a1a;letter-spacing:-0.22px;left:929px;">DETEK | Detektory</span>
<span style="top:709px;font-size:11px;color:#111;letter-spacing:0.69px;font-weight:bold;right:50.31px;">5,000</span>
<div style="left:907px;top:747px;width:352px;height:1px;background:#cdd2e3"></div>
<span style="top:730px;font-size:11px;color:#1a1a1a;letter-spacing:-0.32px;left:929px;">ČIAPKY | Čiapky</span>
<svg style="left:1159px;top:729px;overflow:visible;" width="16" height="16" viewBox="0 0 16 16"><path d="M8 1l7.300 13.500h-14.600z" fill="#f2b04c" stroke="#f2b04c" stroke-width="1" stroke-linejoin="round"/><path d="M8 5.500v5" stroke="#fff" stroke-width="1.800"/><rect x="7.100" y="11.500" width="1.800" height="1.800" fill="#fff"/></svg>
<div style="left:907px;top:768px;width:352px;height:1px;background:#cdd2e3"></div>
<span style="top:751px;font-size:11px;color:#1a1a1a;letter-spacing:0.11px;left:929px;">Čaj | Čaj</span>
<svg style="left:1159px;top:750px;overflow:visible;" width="16" height="16" viewBox="0 0 16 16"><path d="M8 1l7.300 13.500h-14.600z" fill="#f2b04c" stroke="#f2b04c" stroke-width="1" stroke-linejoin="round"/><path d="M8 5.500v5" stroke="#fff" stroke-width="1.800"/><rect x="7.100" y="11.500" width="1.800" height="1.800" fill="#fff"/></svg>
<span style="top:772px;font-size:11px;color:#1a1a1a;letter-spacing:-0.18px;left:929px;">Bicykle cestné | Bicykle cestné</span>
<span style="top:772px;font-size:11px;color:#111;letter-spacing:0.72px;font-weight:bold;right:50.28px;">10,000</span>
<div style="left:925px;top:411px;width:1px;height:378px;background:#cdd2e3"></div>
<div style="left:1155px;top:411px;width:1px;height:378px;background:#cdd2e3"></div>
<div style="left:1259px;top:411px;width:1px;height:378px;background:#cdd2e3"></div>
<svg style="left:1263px;top:437px;" width="9" height="5" viewBox="0 0 9 5"><path d="M0 5h9L4.500 0z" fill="#66738f"/></svg>
<svg style="left:1263px;top:779px;" width="9" height="5" viewBox="0 0 9 5"><path d="M0 0h9L4.500 5z" fill="#66738f"/></svg>
<div style="left:1263px;top:451px;width:9px;height:2px;background:#5f9a4a"></div>
<div style="left:1272px;top:449px;width:4px;height:8px;background:#a9adb8"></div>
<div style="left:1263px;top:610px;width:9px;height:127px;background:#9ba5ba"></div>
<div style="left:1272px;top:763px;width:4px;height:7px;background:#a9adb8"></div>
<span style="top:798px;font-size:11px;color:#1a1a1a;letter-spacing:-0.15px;left:918px;">37 záznamov  (2 označené)</span>
<div style="left:1061px;top:792px;width:1px;height:26px;background:#e6eaf4"></div>
<svg style="left:1072px;top:797px;overflow:visible;" width="16" height="15" viewBox="0 0 16 15"><path d="M1 1.500h14l-5.300 6.300v5.700l-3.400-1.200v-4.500z" fill="#eceef3" stroke="#6f7480" stroke-width="1.200" stroke-linejoin="round"/></svg>
<svg style="left:1103px;top:803px;" width="5" height="3" viewBox="0 0 5 3"><path d="M0 0h5L2.5 3z" fill="#333"/></svg>
<div style="left:7px;top:863px;width:1293px;height:31px;border:1px solid #b3bbcc;border-top:none;"></div>
<svg style="left:17px;top:869px;" width="17" height="17" viewBox="0 0 17 17"><path d="M1 7.500a3 3 0 0 1 5.500-1.500l5 .3 1.500 1.500-1.500 1.500h-1l-1-1-1 1-1.500-.8-1 .5a3 3 0 0 1-5-1.500z" fill="#dfeafa" stroke="#8fb0df" stroke-width=".8"/><circle cx="11.500" cy="4" r="3" fill="#f2a64a" stroke="#b56a1a" stroke-width=".7"/><path d="M6.500 15.500c0-4 2.200-6 5-6s5 2 5 6z" fill="#4a86d8" stroke="#2a5aa8" stroke-width=".7"/></svg>
<span style="top:871px;font-size:11px;color:#5b6478;letter-spacing:-0.07px;left:36px;">Dudášová</span>
<svg style="left:100px;top:872px;" width="15" height="11" viewBox="0 0 15 11"><rect width="15" height="11" fill="#fff" stroke="#9aa" stroke-width=".6"/><rect y="3.700" width="15" height="3.700" fill="#2d5fc4"/><rect y="7.300" width="15" height="3.700" fill="#e03030"/><path d="M2.500 2.500h5v4.500c0 1.500-2.500 2.500-2.500 2.500s-2.500-1-2.500-2.500z" fill="#e03030" stroke="#fff" stroke-width=".7"/></svg>
<svg style="left:135px;top:869px;" width="13" height="17" viewBox="0 0 13 17"><path d="M.5 3v11c0 1.400 2.700 2.500 6 2.500s6-1.100 6-2.500V3" fill="#f2b53c" stroke="#b57a12"/><ellipse cx="6.500" cy="3" rx="6" ry="2.500" fill="#fbd77a" stroke="#b57a12"/><path d="M.5 6.700c0 1.400 2.700 2.500 6 2.500s6-1.100 6-2.500M.5 10.400c0 1.400 2.700 2.500 6 2.500s6-1.100 6-2.500" fill="none" stroke="#b57a12" stroke-width=".8"/></svg>
<span style="top:871px;font-size:11px;color:#5b6478;letter-spacing:-0.13px;left:152px;">IVANAD test (MySQL/IVANADtest, V2246)</span>
<div style="left:364px;top:866px;width:1px;height:26px;background:#f0f3fa"></div>
<svg style="left:382px;top:871px;" width="15" height="15" viewBox="0 0 15 15"><circle cx="7.500" cy="7.500" r="6.800" fill="#f3a93a" stroke="#b56f12" stroke-width=".9"/><circle cx="7.500" cy="7.500" r="4.600" fill="#fbe2b0"/><path d="M4.500 7.500l2.300 2.500 4-5" stroke="#8a4e0a" stroke-width="1.600" fill="none"/></svg>
<span style="top:871px;font-size:11px;color:#5b6478;letter-spacing:0.15px;left:401px;">2.32.532</span>
<div style="left:456px;top:866px;width:1px;height:26px;background:#f0f3fa"></div>
<svg style="left:467px;top:870px;" width="17" height="17" viewBox="0 0 17 17"><rect x=".5" y=".5" width="11" height="13" fill="#fff" stroke="#8f9cbb"/><path d="M2.500 3h4" stroke="#444" stroke-width="1.300"/><path d="M7.500 3h2" stroke="#e03030" stroke-width="1.300"/><circle cx="5" cy="8" r="2" fill="#c23a2a"/><path d="M2 13c0-2 1.300-3 3-3s3 1 3 3z" fill="#c23a2a"/><circle cx="11.500" cy="12" r="4.300" fill="#34b233" stroke="#1d7f1c" stroke-width=".6"/><path d="M9.300 12l1.700 1.800 2.800-3.300" stroke="#fff" stroke-width="1.500" fill="none"/></svg>
<svg style="left:1127px;top:870px;" width="16" height="16" viewBox="0 0 16 16"><rect x=".5" y="2.500" width="12" height="13" fill="#fff" stroke="#777"/><path d="M3 6l1 1.500 2-2.500M3 10l1 1.500 2-2.500" stroke="#d03a2a" stroke-width="1.100" fill="none"/><path d="M8 7h3M8 11h3" stroke="#999"/><path d="M7 10.500l6.500-8 2 1.600-6.500 8-2.500 1z" fill="#f4c542" stroke="#9a7412" stroke-width=".7"/></svg>
<span style="top:871px;font-size:11px;color:#6d7c99;letter-spacing:-0.14px;left:1147px;">3 dokončené úlohy</span>
<svg style="left:1283px;top:877px;" width="7" height="4" viewBox="0 0 7 4"><path d="M0 0h7L3.5 4z" fill="#6c7486"/></svg>
</body></html>
